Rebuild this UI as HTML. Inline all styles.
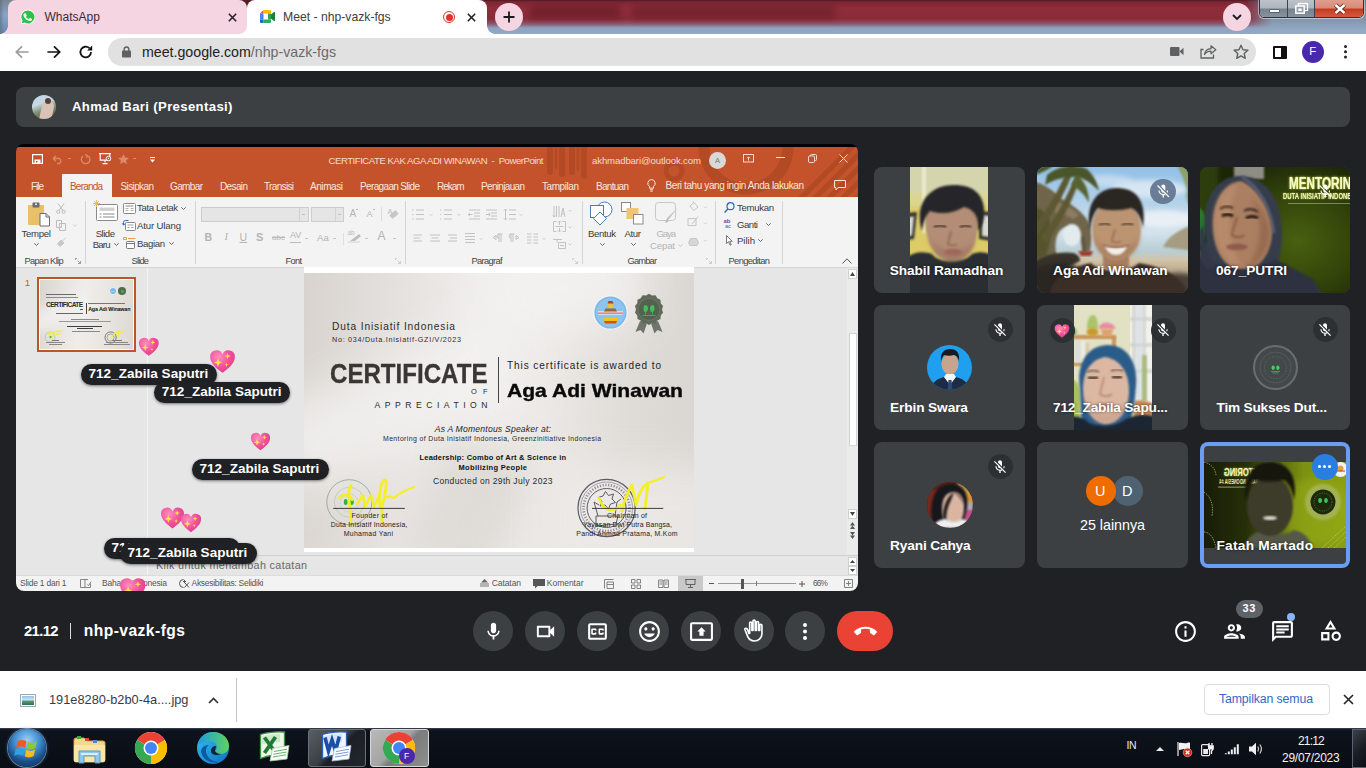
<!DOCTYPE html>
<html lang="id">
<head>
<meta charset="utf-8">
<title>Meet - nhp-vazk-fgs</title>
<style>
*{box-sizing:border-box;margin:0;padding:0}
html,body{width:1366px;height:768px;overflow:hidden;background:#202124;font-family:"Liberation Sans",sans-serif}
.a{position:absolute}
.t{position:absolute;white-space:nowrap;line-height:1}
svg{position:absolute;overflow:visible}
#root{position:relative;width:1366px;height:768px;overflow:hidden;background:#202124}
/* chrome */
#tabstrip{left:0;top:0;width:1366px;height:34px;background:linear-gradient(#4d1b25 0,#7e2633 2px,#8f2c3a 8px,#892a38 19px,#8a5a72 24px,#8ea3c0 28px,#92aac6 34px)}
#toolbar{left:0;top:34px;width:1366px;height:37px;background:#fff}
/* meet */
.tile{position:absolute;background:#3c4043;border-radius:8px;overflow:hidden}
.nm{position:absolute;white-space:nowrap;line-height:1;color:#fff;font-weight:bold;font-size:13.7px;text-shadow:0 0 2px rgba(0,0,0,.5)}
.mute{position:absolute;width:24px;height:24px;border-radius:50%;background:rgba(32,33,36,.55)}
.cb{position:absolute;width:40px;height:40px;border-radius:50%;background:#3c4043;top:611px}
/* ppt */
#ppt{left:16px;top:144px;width:842px;height:447px;background:#000;border-radius:8px;overflow:hidden}
.rt{position:absolute;white-space:nowrap;line-height:1;font-size:10px;color:#444}
.pill{position:absolute;height:21px;border-radius:10.5px;background:#202124;color:#fff;font-weight:bold;font-size:13.5px;line-height:19.4px;padding-left:7.5px;letter-spacing:.03px;white-space:nowrap;box-shadow:0 1px 3px rgba(0,0,0,.5)}
</style>
</head>
<body>
<div id="root">

<!-- ===== CHROME TAB STRIP ===== -->
<div class="a" id="tabstrip"></div>

<!-- left glass edge -->
<div class="a" style="left:0;top:0;width:18px;height:34px;background:linear-gradient(#7a8592 0,#8195ad 8px,#88a5c6 14px,#7d9cc0 22px,#6686ae 34px)"></div><div class="a" style="left:0;top:0;width:4px;height:34px;background:linear-gradient(90deg,rgba(90,100,115,.55),rgba(90,100,115,0))"></div>
<!-- WhatsApp tab (inactive, pink) -->
<div class="a" style="left:236px;top:0;width:14px;height:34px;background:linear-gradient(#4d1b25 0,#5a1c27 8px,#fff 9px)"></div>
<div class="a" style="left:8px;top:0;width:239px;height:34px;background:#f6d5e3;border-radius:8px 8px 8px 0"></div>
<div class="a" style="left:0;top:26px;width:8px;height:8px;background:radial-gradient(circle at 0 0,transparent 7.5px,#f6d5e3 8px)"></div>
<svg style="left:20px;top:9px" width="16" height="16" viewBox="0 0 16 16"><path d="M8 .6A7.3 7.3 0 0 0 1.7 11.7L.7 15.4l3.8-1A7.3 7.3 0 1 0 8 .6z" fill="#fff"/><path d="M8 1.4A6.5 6.5 0 0 0 2.5 11.5L1.8 14.3l2.9-.8A6.5 6.5 0 1 0 8 1.4z" fill="#2bc24a"/><path d="M5.6 4.3c-.2-.4-.4-.4-.6-.4h-.5c-.2 0-.5.1-.7.4-.3.3-.9.9-.9 2.100s.9 2.400 1.100 2.600c.1.200 1.800 2.800 4.400 3.800 2.100.8 2.600.7 3 .6.500-.1 1.500-.6 1.700-1.200.2-.6.2-1.100.1-1.200-.1-.1-.2-.2-.5-.3l-1.700-.8c-.2-.1-.4-.1-.6.1l-.8 1c-.1.2-.3.2-.5.100-1.200-.5-2.300-1.500-3-2.700-.1-.2 0-.4.100-.5l.6-.7c.1-.2.100-.3 0-.5z" fill="#fff" transform="translate(1.1 1.0) scale(.82)"/></svg>
<div class="t" style="left:44.5px;top:11px;font-size:12px;color:#3b2b3a">WhatsApp</div>
<svg style="left:227.500px;top:12.500px" width="9" height="9" viewBox="0 0 9 9"><path d="M.8.8l7.400 7.400M8.200.8L.8 8.200" stroke="#2a1f27" stroke-width="1.600" fill="none"/></svg>
<!-- Meet tab (active, white) -->
<div class="a" style="left:247px;top:0;width:240px;height:34px;background:#fff;border-radius:8px 8px 0 0"></div>
<div class="a" style="left:487px;top:26px;width:8px;height:8px;background:radial-gradient(circle at 100% 0,transparent 7.5px,#fff 8px)"></div>
<svg style="left:259.500px;top:10px" width="15" height="13" viewBox="0 0 15 13"><path d="M0 3.500L3.500 0v3.500z" fill="#ea4335"/><path d="M3.500 0H10a1 1 0 0 1 1 1v2.500H3.500z" fill="#fbbc04"/><path d="M0 3.500h3.500v6H0z" fill="#4285f4"/><path d="M0 9.500h3.500V13H1a1 1 0 0 1-1-1z" fill="#1967d2"/><path d="M3.500 9.500H11V12a1 1 0 0 1-1 1H3.500z" fill="#34a853"/><path d="M11 3.500V5l-1.800 1.500L11 8v1.500H8V6.500 3.500z" fill="#34a853"/><path d="M8.500 6.500L14 2a.6.6 0 0 1 1 .5v8a.6.6 0 0 1-1 .5z" fill="#188038"/><path d="M8.500 6.500L11 4.400v4.200z" fill="#34a853"/></svg>
<div class="t" style="left:283px;top:11px;font-size:12.200px;color:#3c4043">Meet - nhp-vazk-fgs</div>
<div class="a" style="left:443px;top:11px;width:12px;height:12px;border-radius:50%;border:1.200px solid #e0341f;background:#fff"></div>
<div class="a" style="left:445.500px;top:13.500px;width:7px;height:7px;border-radius:50%;background:#e0341f"></div>
<svg style="left:466.500px;top:12.500px" width="9" height="9" viewBox="0 0 9 9"><path d="M.8.8l7.400 7.400M8.200.8L.8 8.200" stroke="#202124" stroke-width="1.600" fill="none"/></svg>
<!-- new tab button -->
<div class="a" style="left:494.500px;top:3px;width:28px;height:28px;border-radius:50%;background:#f6d5e3"></div>
<svg style="left:502.500px;top:11px" width="12" height="12" viewBox="0 0 12 12"><path d="M6 .5v11M.5 6h11" stroke="#1a1a1a" stroke-width="1.800" fill="none"/></svg>
<!-- blurred window text behind glass -->
<div class="a" style="left:530px;top:5px;width:90px;height:14px;background:#6d1f2b;filter:blur(3px);opacity:.8"></div>
<div class="a" style="left:632px;top:5px;width:203px;height:14px;background:#6f202c;filter:blur(3px);opacity:.7"></div>
<!-- right glass -->
<div class="a" style="left:1246px;top:0;width:120px;height:34px;background:linear-gradient(#66778b 0,#74869b 8px,#8397ad 20px,#93a9c4 30px,#95abc6 34px);-webkit-mask-image:linear-gradient(90deg,transparent,#000 26px);mask-image:linear-gradient(90deg,transparent,#000 26px)"></div>
<!-- tab search -->
<div class="a" style="left:1223px;top:3px;width:28px;height:28px;border-radius:50%;background:#f6d5e3"></div>
<svg style="left:1232px;top:13.500px" width="10" height="7" viewBox="0 0 10 7"><path d="M1 1l4 4 4-4" stroke="#1a1a1a" stroke-width="1.800" fill="none"/></svg>
<!-- window controls (Win7) -->
<div class="a" style="left:1259px;top:-4px;width:105px;height:22px;border:1px solid #2c333c;border-radius:0 0 5px 5px;background:#e8eef4;overflow:hidden;box-shadow:0 0 0 1px rgba(255,255,255,.45)">
  <div class="a" style="left:0;top:0;width:28px;height:22px;background:linear-gradient(#c0c7cd 0,#aeb6bd 11px,#77828e 12px,#8a96a3 22px);border-right:1px solid #3b434c"></div>
  <div class="a" style="left:28px;top:0;width:27px;height:22px;background:linear-gradient(#c0c7cd 0,#aeb6bd 11px,#77828e 12px,#8a96a3 22px);border-right:1px solid #3b434c"></div>
  <div class="a" style="left:55px;top:0;width:50px;height:22px;background:linear-gradient(#e3a595 0,#d98a78 11px,#c43a1e 12px,#d9624a 22px)"></div>
  <div class="a" style="left:9px;top:12px;width:11px;height:4px;background:#fff;border:1px solid #5a636d;border-radius:1px"></div>
  <svg style="left:35px;top:6px" width="13" height="11" viewBox="0 0 13 11"><rect x="3.500" y=".5" width="9" height="7" fill="none" stroke="#fff" stroke-width="1.300"/><rect x=".8" y="3" width="8.400" height="7.200" fill="#97a1ab" stroke="#fff" stroke-width="1.500"/><rect x="3.300" y="5.500" width="3.400" height="2.500" fill="#fff"/></svg>
  <svg style="left:74px;top:7px" width="12" height="10" viewBox="0 0 12 10"><path d="M1.500 1l9 8M10.500 1l-9 8" stroke="#4a2019" stroke-width="4" fill="none"/><path d="M1.500 1l9 8M10.500 1l-9 8" stroke="#fff" stroke-width="2.400" fill="none"/></svg>
</div>


<!-- ===== CHROME TOOLBAR ===== -->
<div class="a" id="toolbar"></div>

<!-- back / forward / reload -->
<svg style="left:15px;top:45px" width="14" height="14" viewBox="0 0 14 14"><path d="M13.600 7H1.800M7 1.300L1.300 7 7 12.700" stroke="#9b9b9b" stroke-width="1.700" fill="none"/></svg>
<svg style="left:47px;top:45px" width="14" height="14" viewBox="0 0 14 14"><path d="M.4 7h11.800M7 1.300L12.700 7 7 12.700" stroke="#111" stroke-width="1.700" fill="none"/></svg>
<svg style="left:79px;top:45px" width="14" height="14" viewBox="0 0 14 14"><path d="M12 7A5.300 5.300 0 1 1 10.400 3.200" stroke="#111" stroke-width="1.800" fill="none"/><path d="M13.200 .6v5H8.200z" fill="#111"/></svg>
<!-- omnibox -->
<div class="a" style="left:108px;top:38px;width:1148px;height:28px;border-radius:14px;background:#e1e1e1"></div>
<svg style="left:121.500px;top:45.500px" width="9" height="12" viewBox="0 0 9 12"><rect x="0" y="4.600" width="9" height="7" rx=".8" fill="#5f6062"/><path d="M2.200 5V3.300a2.300 2.300 0 0 1 4.600 0V5" stroke="#5f6062" stroke-width="1.400" fill="none"/></svg>
<div class="t" style="left:142px;top:44.500px;font-size:14.200px;color:#202124">meet.google.com<span style="color:#6b6b6b">/nhp-vazk-fgs</span></div>
<!-- camera indicator -->
<svg style="left:1170px;top:46px" width="14" height="11" viewBox="0 0 14 11"><rect x="0" y="1" width="9.500" height="9" rx="1" fill="#5f6062"/><path d="M9.500 5.500L13.500 1.800v7.400z" fill="#5f6062"/></svg>
<!-- share -->
<svg style="left:1200px;top:44px" width="17" height="15" viewBox="0 0 17 15"><path d="M3.500 5.500H1V14h12.500v-3.500" stroke="#5f6062" stroke-width="1.300" fill="none"/><path d="M4.500 10.500c.5-3.500 2.500-5.500 6.500-5.800V1.800L15.800 5.800 11 9.800V7.200c-3 0-5 1-6.500 3.300z" stroke="#5f6062" stroke-width="1.200" fill="none" stroke-linejoin="round"/></svg>
<!-- star -->
<svg style="left:1232.500px;top:44px" width="16" height="15" viewBox="0 0 16 15"><path d="M8 1.200l2 4.500 4.900.5-3.700 3.300 1.100 4.800L8 11.800l-4.300 2.500 1.100-4.800L1.100 6.200l4.900-.5z" stroke="#5f6062" stroke-width="1.400" fill="none" stroke-linejoin="round"/></svg>
<!-- side panel -->
<div class="a" style="left:1272.500px;top:45.500px;width:14px;height:13px;border:2px solid #111;border-right-width:6px;border-radius:1px;background:#fff"></div>
<!-- profile -->
<div class="a" style="left:1302px;top:41px;width:22px;height:22px;border-radius:50%;background:#4a28ae"></div>
<div class="t" style="left:1309.300px;top:46.300px;font-size:11.500px;color:#fff">F</div>
<!-- menu -->
<div class="a" style="left:1344px;top:44.800px;width:3px;height:3px;border-radius:50%;background:#222;box-shadow:0 5.200px 0 #222,0 10.400px 0 #222"></div>


<!-- ===== MEET: presenter bar ===== -->
<div class="a" style="left:16px;top:87px;width:1334px;height:40px;background:#3c4043;border-radius:8px"></div>

<div class="a" style="left:32px;top:95px;width:24px;height:24px;border-radius:50%;overflow:hidden;background:linear-gradient(160deg,#bcd3e8 0,#c9d9e4 35%,#7d8f6e 60%,#4c5a44 100%)">
  <div class="a" style="left:9px;top:6px;width:12px;height:20px;border-radius:5px 5px 0 0;background:#d9c3b8;transform:rotate(12deg)"></div>
  <div class="a" style="left:13px;top:3px;width:6px;height:6px;border-radius:50%;background:#5a4034"></div>
</div>
<div class="t" style="left:72px;top:99.500px;font-size:13.200px;font-weight:bold;color:#fff;letter-spacing:.33px">Ahmad Bari (Presentasi)</div>


<!-- ===== MEET: presentation (PowerPoint) ===== -->
<div class="a" id="ppt">
<div class="a" style="left:-16px;top:-144px;width:1366px;height:768px">
<!-- PowerPoint window : page coords -->
<div class="a" style="left:16px;top:147px;width:842px;height:50px;background:#c4532b"></div>
<!-- title bar pattern -->
<svg style="left:540px;top:147px;overflow:hidden" width="318" height="50" viewBox="0 0 318 50" fill="none" stroke="#ac4723" opacity=".75">
 <path d="M10 -5v30M22 -5v32M32 -5v30M44 -5v34" stroke-width="6" stroke-linecap="round"/>
 <path d="M16 -5v26M38 -5v28" stroke-width="2.500" stroke-linecap="round"/>
 <circle cx="134" cy="24" r="8" stroke-width="5"/>
 <circle cx="206" cy="0" r="42" stroke-width="11"/>
 <path d="M250 62l70-70M264 62l70-70M278 62l70-70M292 62l70-70M306 62l70-70" stroke-width="5"/>
</svg>
<!-- QAT icons -->
<svg style="left:31.500px;top:154px" width="11" height="10" viewBox="0 0 11 10"><path d="M.6.600h9.800v8.800H.6z" fill="none" stroke="#fff" stroke-width="1.200"/><rect x="2.500" y="5.500" width="6" height="3.800" fill="#fff"/><rect x="4" y="7" width="1.500" height="1.500" fill="#c4532b"/></svg>
<svg style="left:52px;top:155px" width="12" height="9" viewBox="0 0 12 9"><path d="M1 3.500h6.500a3 3 0 0 1 0 5H5M1 3.500L4 .8M1 3.500L4 6.200" stroke="#dc8a68" stroke-width="1.300" fill="none"/></svg>
<div class="a" style="left:68px;top:158px;width:3px;height:1px;background:#dc8a68"></div>
<svg style="left:80px;top:154px" width="11" height="11" viewBox="0 0 11 11"><path d="M7.500 1.500A4.300 4.300 0 1 1 3 2M7.500 1.500L5.200.3M7.500 1.500L6.400 3.800" stroke="#dc8a68" stroke-width="1.300" fill="none"/></svg>
<svg style="left:99px;top:153px" width="13" height="12" viewBox="0 0 13 12"><path d="M0 .6h12M1.200.6v6.500h9.600V.6M6 7.100v2.500M3.500 10.600h5" stroke="#fff" stroke-width="1.100" fill="none"/><circle cx="9.500" cy="5.500" r="2.300" fill="#c4532b" stroke="#fff" stroke-width=".9"/><path d="M8.900 4.500v2l1.600-1z" fill="#fff"/></svg>
<svg style="left:117.500px;top:154px" width="11" height="10" viewBox="0 0 11 10"><path d="M5.500 0l1.600 3.500 3.900.4-2.900 2.600.8 3.500L5.500 8.200 2.100 10l.8-3.500L0 3.900l3.900-.4z" fill="#dc8a68"/></svg>
<div class="a" style="left:133px;top:158px;width:3px;height:1px;background:#dc8a68"></div>
<svg style="left:149.500px;top:157px" width="5" height="6" viewBox="0 0 5 6"><path d="M0 .5h5" stroke="#fff" stroke-width="1"/><path d="M0 2.500h5L2.500 5.500z" fill="#fff"/></svg>
<!-- title -->
<div class="t" style="left:328.50px;top:156.01px;font-size:9.6px;letter-spacing:-0.470px;color:#f7dacd">CERTIFICATE KAK AGA ADI WINAWAN&nbsp; -&nbsp; PowerPoint</div>
<div class="t" style="left:592.00px;top:156.01px;font-size:9.6px;letter-spacing:-0.124px;color:#f7dacd">akhmadbari@outlook.com</div>
<div class="a" style="left:709px;top:152px;width:17px;height:17px;border-radius:50%;background:#d9d9d9"></div>
<div class="t" style="left:715.00px;top:157.10px;font-size:7.5px;color:#777">A</div>
<!-- window buttons -->
<svg style="left:743px;top:153.500px" width="11" height="9" viewBox="0 0 11 9"><rect x=".5" y=".5" width="10" height="7.500" fill="none" stroke="#f7dacd" stroke-width="1"/><path d="M5.500 6.500V3M4 4.300L5.500 2.800 7 4.300" stroke="#f7dacd" stroke-width="1" fill="none"/></svg>
<div class="a" style="left:776px;top:157px;width:9px;height:1px;background:#f7dacd"></div>
<svg style="left:807.500px;top:153.500px" width="9" height="9" viewBox="0 0 9 9"><rect x=".5" y="2" width="6" height="6.500" rx="1" fill="none" stroke="#f7dacd" stroke-width="1"/><path d="M2.500 2V1.500a1 1 0 0 1 1-1h4a1 1 0 0 1 1 1v4a1 1 0 0 1-1 1H6.500" fill="none" stroke="#f7dacd" stroke-width="1"/></svg>
<svg style="left:838.500px;top:153.500px" width="9" height="9" viewBox="0 0 9 9"><path d="M.5.500l8 8M8.500.500l-8 8" stroke="#f7dacd" stroke-width="1" fill="none"/></svg>
<!-- ribbon tabs -->
<div class="a" style="left:62px;top:174px;width:50px;height:24px;background:#f3f3f3"></div>
<div class="t" style="left:31.00px;top:181.50px;font-size:10.0px;letter-spacing:-1.042px;color:#fbe6dc">File</div>
<div class="t" style="left:70.00px;top:181.50px;font-size:10.0px;letter-spacing:-0.802px;color:#c4532b">Beranda</div>
<div class="t" style="left:120.50px;top:181.50px;font-size:10.0px;letter-spacing:-0.616px;color:#fbe6dc">Sisipkan</div>
<div class="t" style="left:170.00px;top:181.50px;font-size:10.0px;letter-spacing:-0.625px;color:#fbe6dc">Gambar</div>
<div class="t" style="left:220.00px;top:181.50px;font-size:10.0px;letter-spacing:-0.628px;color:#fbe6dc">Desain</div>
<div class="t" style="left:264.00px;top:181.50px;font-size:10.0px;letter-spacing:-0.663px;color:#fbe6dc">Transisi</div>
<div class="t" style="left:310.00px;top:181.50px;font-size:10.0px;letter-spacing:-0.430px;color:#fbe6dc">Animasi</div>
<div class="t" style="left:360.00px;top:181.50px;font-size:10.0px;letter-spacing:-0.645px;color:#fbe6dc">Peragaan Slide</div>
<div class="t" style="left:437.00px;top:181.50px;font-size:10.0px;letter-spacing:-1.047px;color:#fbe6dc">Rekam</div>
<div class="t" style="left:481.00px;top:181.50px;font-size:10.0px;letter-spacing:-0.672px;color:#fbe6dc">Peninjauan</div>
<div class="t" style="left:542.00px;top:181.50px;font-size:10.0px;letter-spacing:-0.433px;color:#fbe6dc">Tampilan</div>
<div class="t" style="left:596.00px;top:181.50px;font-size:10.0px;letter-spacing:-0.711px;color:#fbe6dc">Bantuan</div>
<svg style="left:647px;top:179px" width="9" height="13" viewBox="0 0 9 13"><path d="M4.500.600a3.700 3.700 0 0 0-2 6.800v1.800h4V7.400a3.700 3.700 0 0 0-2-6.800zM3 10.800h3M3.400 12.200h2.200" stroke="#fbe6dc" stroke-width="1" fill="none"/></svg>
<div class="t" style="left:665.50px;top:181.00px;font-size:10.0px;letter-spacing:-0.398px;color:#fbe6dc">Beri tahu yang ingin Anda lakukan</div>
<svg style="left:834px;top:180px" width="12" height="11" viewBox="0 0 12 11"><path d="M.5.500h11v7H4L2 10V7.500H.5z" stroke="#fbe6dc" stroke-width="1" fill="none"/></svg>
<!-- ribbon body -->
<div class="a" style="left:16px;top:197px;width:842px;height:70px;background:#f3f3f3"></div>
<div class="a" style="left:16px;top:266.500px;width:842px;height:1.500px;background:#d6d6d6"></div>
<!-- separators -->
<div class="a" style="left:85px;top:201px;width:1px;height:63px;background:#d4d4d4"></div>
<div class="a" style="left:195px;top:201px;width:1px;height:63px;background:#d4d4d4"></div>
<div class="a" style="left:404.500px;top:201px;width:1px;height:63px;background:#d4d4d4"></div>
<div class="a" style="left:581.500px;top:201px;width:1px;height:63px;background:#d4d4d4"></div>
<div class="a" style="left:715px;top:201px;width:1px;height:63px;background:#d4d4d4"></div>
<div class="a" style="left:782px;top:201px;width:1px;height:63px;background:#d4d4d4"></div>
<!-- Papan Klip group -->
<svg style="left:27px;top:201.500px" width="24" height="25" viewBox="0 0 24 25"><rect x="1" y="3" width="16" height="20" rx="1" fill="#e8c069"/><rect x="5.500" y=".5" width="7" height="5" rx="1" fill="#6b6b6b"/><circle cx="9" cy="2.200" r="1" fill="#f3f3f3"/><path d="M13 11.500h6l3.500 3.500V24H13z" fill="#fff" stroke="#6b6b6b" stroke-width="1"/><path d="M19 11.500V15h3.500" fill="none" stroke="#6b6b6b" stroke-width="1"/></svg>
<div class="t" style="left:21.50px;top:228.51px;font-size:9.6px;letter-spacing:-0.287px;color:#3b3b3b">Tempel</div>
<svg style="left:34px;top:243px" width="5" height="3" viewBox="0 0 5 3"><path d="M.3.300l2.200 2.200L4.700.3" stroke="#555" stroke-width=".9" fill="none"/></svg>
<svg style="left:56px;top:203px" width="10" height="11" viewBox="0 0 10 11"><path d="M2 .5l5 7M8 .5l-5 7" stroke="#bdbdbd" stroke-width="1" fill="none"/><circle cx="2.300" cy="8.800" r="1.600" fill="none" stroke="#bdbdbd" stroke-width="1"/><circle cx="7.700" cy="8.800" r="1.600" fill="none" stroke="#bdbdbd" stroke-width="1"/></svg>
<svg style="left:56px;top:220px" width="10" height="11" viewBox="0 0 10 11"><path d="M.5.500h5v7h-5zM3.500 3.500h6v7h-6z" fill="#f3f3f3" stroke="#bdbdbd" stroke-width="1"/></svg>
<svg style="left:72.500px;top:224px" width="4" height="3" viewBox="0 0 5 3"><path d="M.3.300l2.200 2.200L4.700.3" stroke="#c4c4c4" stroke-width=".9" fill="none"/></svg>
<svg style="left:56px;top:237px" width="11" height="10" viewBox="0 0 11 10"><path d="M10 .5L6 4.500M5 3l3 3-4 3.500L1.500 7z" fill="#c9c9c9" stroke="#c0c0c0" stroke-width=".8"/></svg>
<div class="t" style="left:24.50px;top:257.16px;font-size:9.3px;letter-spacing:-0.641px;color:#444">Papan Klip</div>
<svg style="left:75px;top:258px" width="6" height="6" viewBox="0 0 6 6"><path d="M.5 2V.5H2M2.500 2.500l3 3M5.500 3v2.500H3" stroke="#888" stroke-width=".8" fill="none"/></svg>
<!-- Slide group -->
<svg style="left:93px;top:200px" width="26" height="23" viewBox="0 0 26 23"><rect x="3.500" y="4.500" width="21" height="16" rx="1" fill="#fff" stroke="#8a8a8a" stroke-width="1"/><rect x="6.500" y="7.500" width="15" height="3.500" fill="#d2d2d2"/><path d="M6.500 14h2M10 14h11.500M6.500 17h2M10 17h11.500" stroke="#8a8a8a" stroke-width="1"/><path d="M3.500 0v7M0 3.500h7M1 1l5 5M6 1L1 6" stroke="#e6b84a" stroke-width=".9"/></svg>
<div class="t" style="left:95.70px;top:228.51px;font-size:9.6px;letter-spacing:-0.511px;color:#3b3b3b">Slide</div>
<div class="t" style="left:92.70px;top:239.51px;font-size:9.6px;letter-spacing:-0.822px;color:#3b3b3b">Baru</div>
<svg style="left:113.500px;top:243px" width="5" height="3" viewBox="0 0 5 3"><path d="M.3.300l2.200 2.200L4.700.3" stroke="#555" stroke-width=".9" fill="none"/></svg>
<svg style="left:123px;top:203px" width="13" height="11" viewBox="0 0 13 11"><rect x=".5" y=".5" width="12" height="10" rx="1" fill="#fff" stroke="#8a8a8a" stroke-width="1"/><path d="M2.500 3h8" stroke="#8a8a8a" stroke-width="1.200"/><path d="M2.500 5.500h3M2.500 7.500h3M7.500 5.500h3M7.500 7.500h3" stroke="#b0b0b0" stroke-width="1"/></svg>
<div class="t" style="left:137.00px;top:203.01px;font-size:9.6px;letter-spacing:-0.365px;color:#3b3b3b">Tata Letak</div>
<svg style="left:181px;top:206.500px" width="5" height="3" viewBox="0 0 5 3"><path d="M.3.300l2.200 2.200L4.700.3" stroke="#555" stroke-width=".9" fill="none"/></svg>
<svg style="left:123px;top:220px" width="13" height="11" viewBox="0 0 13 11"><rect x="2.500" y="2.500" width="10" height="8" rx="1" fill="#fff" stroke="#8a8a8a" stroke-width="1"/><path d="M4.500 5h6M4.500 7.500h2M8 7.500h2.500" stroke="#a0a0a0" stroke-width="1"/><path d="M.5 5V2.500a2 2 0 0 1 2-2h3M.5 5L-.8 3.300M.5 5l1.700-1.300" stroke="#2b6cb8" stroke-width="1" fill="none"/></svg>
<div class="t" style="left:137.00px;top:221.01px;font-size:9.6px;letter-spacing:-0.148px;color:#3b3b3b">Atur Ulang</div>
<svg style="left:123px;top:237px" width="13" height="12" viewBox="0 0 13 12"><path d="M.5.500h3v2h-3zM5 1.500h7.500" stroke="#e6a23c" stroke-width="1" fill="none"/><rect x="3.500" y="4.500" width="8" height="7" rx=".8" fill="#fff" stroke="#7a7a7a" stroke-width="1"/><path d="M3.500 6.500h8" stroke="#7a7a7a" stroke-width="1"/></svg>
<div class="t" style="left:137.00px;top:238.51px;font-size:9.6px;letter-spacing:-0.375px;color:#3b3b3b">Bagian</div>
<svg style="left:169px;top:241.500px" width="5" height="3" viewBox="0 0 5 3"><path d="M.3.300l2.200 2.200L4.700.3" stroke="#555" stroke-width=".9" fill="none"/></svg>
<div class="t" style="left:131.50px;top:257.16px;font-size:9.3px;letter-spacing:-0.797px;color:#444">Slide</div>
<!-- Font group -->
<div class="a" style="left:201px;top:206.500px;width:107.500px;height:15.500px;background:#e5e5e5;border:1px solid #cdcdcd"></div>
<div class="a" style="left:299px;top:207.500px;width:1px;height:13.500px;background:#d2d2d2"></div>
<div class="a" style="left:302px;top:213.500px;width:3px;height:1px;background:#c2c2c2"></div>
<div class="a" style="left:310.500px;top:206.500px;width:33px;height:15.500px;background:#e5e5e5;border:1px solid #cdcdcd"></div>
<div class="a" style="left:335px;top:207.500px;width:1px;height:13.500px;background:#d2d2d2"></div>
<div class="a" style="left:337.500px;top:213.500px;width:3px;height:1px;background:#c2c2c2"></div>
<div class="t" style="left:349.50px;top:209.30px;font-size:10.0px;color:#b4b4b4">A</div><div class="a" style="left:356px;top:208.500px;width:2px;height:1px;background:#b4b4b4"></div>
<div class="t" style="left:366.50px;top:210.32px;font-size:9.0px;color:#b4b4b4">A</div><div class="a" style="left:372.500px;top:209px;width:2px;height:1px;background:#b4b4b4"></div>
<div class="a" style="left:381px;top:207px;width:1px;height:14px;background:#dcdcdc"></div>
<div class="t" style="left:387.50px;top:207.60px;font-size:7.5px;color:#bcbcbc">A</div>
<div class="a" style="left:390px;top:212px;width:8px;height:5px;background:#c6c6c6;transform:rotate(-40deg);border-radius:1px"></div>
<div class="t" style="left:204.50px;top:232.04px;font-size:10.5px;color:#b4b4b4;font-weight:bold">B</div>
<div class="t" style="left:224.50px;top:232.04px;font-size:10.5px;color:#b4b4b4;font-style:italic;font-family:'Liberation Serif',serif">I</div>
<div class="t" style="left:239.50px;top:232.04px;font-size:10.5px;color:#b4b4b4;text-decoration:underline">U</div>
<div class="t" style="left:256.00px;top:231.78px;font-size:11.0px;color:#b4b4b4;font-weight:bold">S</div>
<div class="t" style="left:272.00px;top:234.34px;font-size:8.0px;color:#b9b9b9;text-decoration:line-through">abc</div>
<div class="t" style="left:290.00px;top:231.32px;font-size:9.0px;color:#b4b4b4">AV</div>
<div class="a" style="left:290px;top:241.500px;width:11px;height:1px;background:#b9b9b9"></div>
<div class="a" style="left:305px;top:237.500px;width:3px;height:1px;background:#c6c6c6"></div>
<div class="t" style="left:317.00px;top:232.51px;font-size:9.6px;color:#b4b4b4">Aa</div>
<div class="a" style="left:332.500px;top:237.500px;width:3px;height:1px;background:#c6c6c6"></div>
<div class="a" style="left:343px;top:233px;width:1px;height:12px;background:#dfdfdf"></div>
<div class="t" style="left:347.50px;top:229.62px;font-size:6.5px;color:#bcbcbc">ab</div>
<div class="a" style="left:350px;top:237px;width:11px;height:2.500px;background:#bdbdbd;transform:rotate(-38deg)"></div>
<div class="a" style="left:347.500px;top:241px;width:12px;height:2px;background:#e2e2e2"></div>
<div class="a" style="left:365px;top:237.500px;width:3px;height:1px;background:#c6c6c6"></div>
<div class="t" style="left:377.50px;top:230.26px;font-size:12.0px;color:#b4b4b4">A</div>
<div class="a" style="left:393px;top:237.500px;width:3px;height:1px;background:#c6c6c6"></div>
<div class="t" style="left:285.50px;top:257.16px;font-size:9.3px;letter-spacing:-0.703px;color:#444">Font</div>
<svg style="left:395px;top:258px" width="6" height="6" viewBox="0 0 6 6"><path d="M.5 2V.5H2M2.500 2.500l3 3M5.500 3v2.500H3" stroke="#c4c4c4" stroke-width=".8" fill="none"/></svg>
<!-- Paragraf group (all disabled) -->
<svg style="left:412px;top:207.700px" width="160" height="42" viewBox="0 0 160 42" fill="none" stroke="#c2c2c2" stroke-width="1">
 <path d="M0 2h1.500M0 6.500h1.500M0 11h1.500M4 2h8M4 6.500h8M4 11h8"/>
 <path d="M17.500 6l1.500 1.500L20.500 6" stroke="#d0d0d0"/>
 <path d="M28 2h1.200M28 6.500h1.200M28 11h1.200M32 2h8M32 6.500h8M32 11h8"/>
 <path d="M45.500 6l1.500 1.500L48.500 6" stroke="#d0d0d0"/>
 <path d="M57 2h11M62 5h6M62 8h6M57 11h11M60.500 6.500h-4M58 5l-1.800 1.500L58 8"/>
 <path d="M74 2h11M79 5h6M79 8h6M74 11h11M74 6.500h4M76.500 5l1.800 1.500L76.500 8"/>
 <path d="M93.500 1v11M92 2.500L93.500 1 95 2.500M92 10.500l1.500 1.500 1.500-1.500M97 2h7M97 6.500h7M97 11h7"/>
 <path d="M107.500 6l1.500 1.500 1.500-1.500" stroke="#d0d0d0"/>
 <path d="M1.500 27h8.500M1.500 30h6.500M1.500 33h8.500"/>
 <path d="M18 27h10M19.500 30h7M18 33h10"/>
 <path d="M36 27h9M38 30h7M36 33h9"/>
 <path d="M53 25.500h10M53 28.500h10M53 31.500h10M53 34.500h10"/>
 <path d="M67.500 30l1.500 1.500 1.500-1.500" stroke="#d0d0d0"/>
 <path d="M81 29.500l3-2v4zM89 26v8M87 26v8M86 26h4.500M87 26a2 2 0 0 0 0 4" />
 <path d="M107 29.500l-3-2v4zM101 26v8M99 26v8M98 26h4.500M99 26a2 2 0 0 0 0 4" />
 <path d="M115 26h4.500M115 29h4.500M115 32h4.500M115 35h4.500M121.500 26h4.500M121.500 29h4.500M121.500 32h4.500M121.500 35h4.500"/>
 <path d="M130.500 30l1.500 1.500 1.500-1.500" stroke="#d0d0d0"/>
 <path d="M142 -2v11M144.500 -2v11M147 -2v11M140.800 7.500L142 9l1.200-1.500M149 9l2-9 2 9M149.800 6h2.500"/>
 <path d="M156.500 2l1.500 1.500 1.500-1.500" stroke="#d0d0d0"/>
 <path d="M141.500 13.500v10M153.500 13.500v10M141.500 13.500h3M150.500 13.500h3M141.500 23.500h3M150.500 23.500h3M143.500 18.500h8M147.500 13v4M146 14.500l1.500-1.500 1.500 1.500M147.500 24v-4M146 22.500l1.500 1.500 1.500-1.500"/>
 <path d="M156.500 18.500l1.500 1.500 1.500-1.500" stroke="#d0d0d0"/>
 <path d="M141 31.500h9M145 31.500v3M146.500 34.500h7v6h-7zM148 37.500h4"/>
 <path d="M156.500 35.500l1.500 1.500 1.500-1.500" stroke="#d0d0d0"/>
</svg>
<div class="t" style="left:471.50px;top:257.16px;font-size:9.3px;letter-spacing:-0.667px;color:#444">Paragraf</div>
<svg style="left:572px;top:258px" width="6" height="6" viewBox="0 0 6 6"><path d="M.5 2V.5H2M2.500 2.500l3 3M5.500 3v2.500H3" stroke="#c4c4c4" stroke-width=".8" fill="none"/></svg>
<!-- Gambar group -->
<svg style="left:589px;top:200.500px" width="25" height="25" viewBox="0 0 25 25"><circle cx="15.500" cy="8.500" r="7.500" fill="#fff" stroke="#4a7ab5" stroke-width="1"/><rect x="1.500" y="4.500" width="13" height="12" fill="#fff" stroke="#4a7ab5" stroke-width="1"/><path d="M11 11l6.500 6.500L11 24l-6.500-6.500z" fill="#fff" stroke="#4a7ab5" stroke-width="1"/></svg>
<div class="t" style="left:588.00px;top:228.51px;font-size:9.6px;letter-spacing:-0.375px;color:#3b3b3b">Bentuk</div>
<svg style="left:599.500px;top:243px" width="5" height="3" viewBox="0 0 5 3"><path d="M.3.300l2.200 2.200L4.700.3" stroke="#555" stroke-width=".9" fill="none"/></svg>
<svg style="left:621px;top:201.500px" width="23" height="23" viewBox="0 0 23 23"><rect x=".5" y=".5" width="9" height="9" fill="#fff" stroke="#8a8a8a" stroke-width="1"/><rect x="5.500" y="6" width="12" height="11" fill="#efc578"/><rect x="12.500" y="12.500" width="9.500" height="9.500" fill="#fff" stroke="#8a8a8a" stroke-width="1"/></svg>
<div class="t" style="left:624.50px;top:228.51px;font-size:9.6px;letter-spacing:-0.370px;color:#3b3b3b">Atur</div>
<svg style="left:630.500px;top:243px" width="5" height="3" viewBox="0 0 5 3"><path d="M.3.300l2.200 2.200L4.700.3" stroke="#555" stroke-width=".9" fill="none"/></svg>
<svg style="left:655px;top:202px" width="26" height="24" viewBox="0 0 26 24"><rect x=".5" y=".5" width="20" height="18" rx="3" fill="#f3f3f3" stroke="#c8c8c8" stroke-width="1"/><path d="M22.500 6L14 17l-3 3 1-4z" fill="#c2c2c2"/><path d="M10 21l3.500-1.500-1.500-2.500z" fill="#b5b5b5"/></svg>
<div class="t" style="left:656.50px;top:228.51px;font-size:9.6px;letter-spacing:-1.146px;color:#b4b4b4">Gaya</div>
<div class="t" style="left:650.00px;top:240.51px;font-size:9.6px;letter-spacing:-0.152px;color:#b4b4b4">Cepat</div>
<svg style="left:677.500px;top:244px" width="5" height="3" viewBox="0 0 5 3"><path d="M.3.300l2.200 2.200L4.700.3" stroke="#c4c4c4" stroke-width=".9" fill="none"/></svg>
<svg style="left:687px;top:201px" width="24" height="48" viewBox="0 0 24 48" fill="none" stroke="#c6c6c6" stroke-width="1"><path d="M3 5l4-3.500L11 6 6.500 9.500zM7 1.500L5.500 0"/><path d="M17 5.500l1.500 1.500L20 5.500" stroke="#d2d2d2"/><path d="M1 17.500h8v7H1zM5 23l6-7.500" /><path d="M17 21.500l1.500 1.500 1.500-1.500" stroke="#d2d2d2"/><path d="M1.500 42l2-4.500h6l2 4.500-1.500 2.500h-7z" fill="#d6d6d6"/><path d="M17 39l1.500 1.500L20 39" stroke="#d2d2d2"/></svg>
<div class="t" style="left:627.50px;top:257.16px;font-size:9.3px;letter-spacing:-0.819px;color:#444">Gambar</div>
<svg style="left:706px;top:258px" width="6" height="6" viewBox="0 0 6 6"><path d="M.5 2V.5H2M2.500 2.500l3 3M5.500 3v2.500H3" stroke="#c4c4c4" stroke-width=".8" fill="none"/></svg>
<!-- Pengeditan group -->
<svg style="left:723.500px;top:202px" width="11" height="11" viewBox="0 0 11 11"><circle cx="6.500" cy="4.200" r="3.500" fill="none" stroke="#2b6cb8" stroke-width="1.200"/><path d="M4 6.800L.6 10.400" stroke="#2b6cb8" stroke-width="1.400"/></svg>
<div class="t" style="left:737.00px;top:203.01px;font-size:9.6px;letter-spacing:-0.323px;color:#3b3b3b">Temukan</div>
<div class="t" style="left:723.50px;top:218.38px;font-size:6.0px;color:#7a4a9a;font-weight:bold">ab</div>
<div class="t" style="left:725.00px;top:224.14px;font-size:5.5px;color:#2b6cb8">ac</div>
<div class="t" style="left:737.00px;top:219.51px;font-size:9.6px;letter-spacing:-0.484px;color:#3b3b3b">Ganti</div>
<svg style="left:765.500px;top:223px" width="5" height="3" viewBox="0 0 5 3"><path d="M.3.300l2.200 2.200L4.700.3" stroke="#555" stroke-width=".9" fill="none"/></svg>
<svg style="left:726px;top:235px" width="7" height="11" viewBox="0 0 7 11"><path d="M.5.500v8l2-1.800 1.500 3.500 1.200-.5-1.500-3.400h2.500z" fill="#fff" stroke="#555" stroke-width=".8"/></svg>
<div class="t" style="left:737.00px;top:235.51px;font-size:9.6px;letter-spacing:-0.035px;color:#3b3b3b">Pilih</div>
<svg style="left:758px;top:239px" width="5" height="3" viewBox="0 0 5 3"><path d="M.3.300l2.200 2.200L4.700.3" stroke="#555" stroke-width=".9" fill="none"/></svg>
<div class="t" style="left:728.50px;top:257.16px;font-size:9.3px;letter-spacing:-0.616px;color:#444">Pengeditan</div>
<svg style="left:842px;top:257.500px" width="10" height="6" viewBox="0 0 10 6"><path d="M.5 5.500L5 .8l4.500 4.700" stroke="#555" stroke-width="1" fill="none"/></svg>
<!-- PPT workspace -->
<div class="a" style="left:16px;top:268px;width:842px;height:308px;background:#e6e6e6"></div>
<div class="a" style="left:147px;top:268px;width:1px;height:307px;background:#f4f4f4"></div>
<div class="t" style="left:24.70px;top:278.20px;font-size:9.8px;color:#c8603a">1</div>
<!-- thumbnail -->
<div class="a" style="left:37px;top:277px;width:98.500px;height:75px;border:2px solid #ba5530;background:#fff"></div>
<div class="a" style="left:39.800px;top:280px;width:93px;height:69px;overflow:hidden;background:linear-gradient(98deg,#d9d4cf 0,#e6e3df 22%,#efedea 45%,#e9e6e2 70%,#dcd8d3 100%)"><div class="a" style="left:-10px;top:22px;width:60px;height:22px;background:#f3f2f0;filter:blur(6px);opacity:.8;transform:rotate(-22deg)"></div></div>
<div class="a" style="left:46px;top:293.70px;width:30.0px;height:1.2px;background:#6a6a6a"></div>
<div class="a" style="left:46px;top:296.90px;width:31.5px;height:0.8px;background:#8a8a8a"></div>
<div class="a" style="left:109.200px;top:287.200px;width:7.600px;height:7.600px;border-radius:50%;background:#7db8e8;border:.8px solid #f2f2f2"></div>
<div class="a" style="left:110.800px;top:290.500px;width:4.400px;height:1.200px;background:#e9c86a"></div>
<div class="a" style="left:118.300px;top:287.200px;width:8.200px;height:8.200px;border-radius:50%;background:#56694f"></div>
<div class="a" style="left:120.600px;top:289.800px;width:3.600px;height:3px;border-radius:40%;background:#38b04f"></div>
<div class="t" style="left:46.00px;top:302.27px;font-size:6.6px;letter-spacing:-0.591px;color:#2f2c2a;font-weight:bold">CERTIFICATE</div>
<div class="a" style="left:80px;top:309.40px;width:3.2px;height:0.8px;background:#555"></div>
<div class="a" style="left:56px;top:312.80px;width:27.2px;height:1px;background:#666"></div>
<div class="a" style="left:86.2px;top:302.50px;width:0.7px;height:11px;background:#444"></div>
<div class="a" style="left:88.2px;top:303.15px;width:36.8px;height:0.9px;background:#777"></div>
<div class="t" style="left:88.20px;top:307.24px;font-size:5.3px;letter-spacing:-0.143px;color:#0f0f0f;font-weight:bold">Aga Adi Winawan</div>
<div class="a" style="left:71px;top:318.80px;width:28.0px;height:0.8px;background:#8a8a8a"></div>
<div class="a" style="left:58.5px;top:321.15px;width:52.5px;height:0.7px;background:#9a9a9a"></div>
<div class="a" style="left:67px;top:325.65px;width:35.0px;height:1.1px;background:#3f3f3f"></div>
<div class="a" style="left:77px;top:328.05px;width:16.0px;height:1.1px;background:#3f3f3f"></div>
<div class="a" style="left:71.5px;top:331.20px;width:28.0px;height:0.8px;background:#8a8a8a"></div>
<svg style="left:43px;top:329px" width="26" height="12" viewBox="0 0 26 12" fill="none"><circle cx="7" cy="8" r="5" stroke="#9ab59a" stroke-width=".5"/><path d="M5 5c4-2 8-3 13-3M7 9c3-3 6-4 10-4M8 3l-1 7" stroke="#eef03a" stroke-width="1.600" stroke-linecap="round" opacity=".9"/><circle cx="7.500" cy="8" r="1.100" fill="#2fb84e"/></svg>
<div class="a" style="left:52px;top:340.15px;width:6.5px;height:0.7px;background:#777"></div>
<div class="a" style="left:46px;top:342.25px;width:18.5px;height:0.7px;background:#888"></div>
<div class="a" style="left:49px;top:344.25px;width:12.5px;height:0.7px;background:#888"></div>
<svg style="left:103px;top:329px" width="26" height="16" viewBox="0 0 26 16" fill="none"><circle cx="7.600" cy="8.500" r="5.600" stroke="#6a6a72" stroke-width=".9"/><circle cx="7.600" cy="8.500" r="3.600" stroke="#7a7a82" stroke-width=".6"/><path d="M8 9c2-3 5-6 8-7l-1 6M14 6c2-2 5-3 7-4" stroke="#eef03a" stroke-width="1.500" stroke-linecap="round" opacity=".9"/></svg>
<div class="a" style="left:112px;top:340.15px;width:10.0px;height:0.7px;background:#777"></div>
<div class="a" style="left:106px;top:342.25px;width:22.0px;height:0.7px;background:#888"></div>
<div class="a" style="left:104px;top:344.25px;width:25.5px;height:0.7px;background:#888"></div>
<!-- slide -->
<div class="a" style="left:304px;top:267px;width:389.500px;height:285px;background:#fff"></div>
<div class="a" style="left:304px;top:273px;width:389.500px;height:275px;overflow:hidden;background:linear-gradient(95deg,#d8d3ce 0,#e2dedb 18%,#efedeb 42%,#ebe8e5 62%,#dfdbd7 82%,#d9d5d0 100%)">
  <div class="a" style="left:-40px;top:90px;width:260px;height:90px;background:#f3f2f0;filter:blur(22px);opacity:.8;transform:rotate(-22deg)"></div>
  <div class="a" style="left:180px;top:-30px;width:160px;height:90px;background:#f4f3f1;filter:blur(22px);opacity:.8;transform:rotate(-12deg)"></div>
  <div class="a" style="left:120px;top:170px;width:90px;height:130px;background:#d5d0cb;filter:blur(18px);opacity:.6;transform:rotate(20deg)"></div>
  <div class="a" style="left:250px;top:190px;width:200px;height:120px;background:#f0eeec;filter:blur(22px);opacity:.7"></div>
</div>
<div class="t" style="left:332.00px;top:321.60px;font-size:10.2px;letter-spacing:0.866px;color:#2d2b2a">Duta Inisiatif Indonesia</div>
<div class="t" style="left:332.00px;top:336.06px;font-size:7.2px;letter-spacing:0.723px;color:#2d2b2a">No: 034/Duta.Inisiatif-GZI/V/2023</div>
<div class="t" style="left:330.00px;top:359.55px;font-size:27.6px;transform:scaleX(0.8732);transform-origin:0 50%;color:#3a3633;font-weight:bold;-webkit-text-stroke:.3px #3a3633">CERTIFICATE</div>
<div class="t" style="left:471.00px;top:387.70px;font-size:7.5px;letter-spacing:6.078px;color:#2d2b2a">OF</div>
<div class="t" style="left:374.50px;top:400.53px;font-size:8.6px;letter-spacing:4.513px;color:#2d2b2a">APPRECIATION</div>
<div class="a" style="left:498px;top:357px;width:1px;height:46px;background:#4a4643"></div>
<div class="t" style="left:507.00px;top:360.70px;font-size:10.0px;letter-spacing:0.941px;color:#222">This certificate is awarded to</div>
<div class="t" style="left:507.00px;top:382.54px;font-size:17.8px;transform:scaleX(1.1863);transform-origin:0 50%;color:#0a0a0a;font-weight:bold;-webkit-text-stroke:.35px #0a0a0a">Aga Adi Winawan</div>
<!-- logos -->
<svg style="left:593px;top:294.500px" width="35" height="35" viewBox="0 0 35 35"><circle cx="17.500" cy="17.500" r="16.800" fill="#7db8e8" stroke="#f2f2f2" stroke-width="1.400"/><circle cx="17.500" cy="17.500" r="14.500" fill="#8cc4ee"/><path d="M5 16.500h25v3H5z" fill="#fff"/><path d="M5 17.500h25v1.200H5z" fill="#d9534f"/><circle cx="17.500" cy="10.500" r="3" fill="#e8c23a"/><path d="M14.500 8.500h6l-1-2.500h-4z" fill="#c0392b"/><path d="M12.500 13.500h10l1.500 3h-13z" fill="#8a6d3b"/><path d="M10 23h15l-2 5.500H12z" fill="#f0c419"/><path d="M11 26h13l-1 2.500H12z" fill="#d35400"/></svg>
<svg style="left:631px;top:293px" width="36" height="41" viewBox="0 0 36 41"><path d="M9 28l-4.500 11 5-2 3 3.500 3.500-10zM27 28l4.500 11-5-2-3 3.500-3.500-10z" fill="#70756c"/><path d="M18 .8l3 1.800 3.500-.3 1.800 3 3.200 1.400.2 3.500L32 13l-1 3.400 1 3.400-2.300 2.700-.2 3.500-3.200 1.500-1.800 3-3.500-.3-3 1.800-3-1.800-3.500.3-1.800-3-3.200-1.500-.2-3.500L4 19.800l1-3.400L4 13l2.300-2.800.2-3.500 3.200-1.400 1.800-3 3.500.3z" fill="#5f6a5b"/><circle cx="18" cy="16.400" r="11" fill="#55614f" stroke="#6f7d68" stroke-width=".8"/><path d="M14 12c2 0 3 1.500 3 3.500S16 19 14.500 19 12.500 18 12.500 16 13 12 14 12zM22 12c1 0 1.500 2 1.500 4s-1 3-2.500 3-2-1.500-2-3.500 1-3.500 3-3.500z" fill="#3fbf5a"/><path d="M14.500 19v2.500M21.500 19v2.500M11.500 22.500h13" stroke="#3fbf5a" stroke-width=".8"/></svg>
<div class="t" style="left:434.70px;top:424.53px;font-size:8.6px;letter-spacing:0.206px;color:#1f1f1f;font-style:italic">As A Momentous Speaker at:</div>
<div class="t" style="left:383.00px;top:435.71px;font-size:6.9px;letter-spacing:0.390px;color:#2a2a2a">Mentoring of Duta Inisiatif Indonesia, Greenzinitiative Indonesia</div>
<div class="t" style="left:419.50px;top:453.80px;font-size:7.5px;letter-spacing:0.211px;color:#111;font-weight:bold">Leadership: Combo of Art &amp; Science in</div>
<div class="t" style="left:458.50px;top:464.40px;font-size:7.5px;letter-spacing:0.322px;color:#111;font-weight:bold">Mobilizing People</div>
<div class="t" style="left:433.00px;top:476.58px;font-size:8.5px;letter-spacing:0.343px;color:#2a2a2a">Conducted on 29th July 2023</div>
<!-- left signature -->
<svg style="left:326px;top:476px" width="96" height="52" viewBox="0 0 96 52" fill="none"><circle cx="23.300" cy="26.200" r="22.500" stroke="#8aa08e" stroke-width=".8"/><circle cx="23.300" cy="26.200" r="15" stroke="#a9c4a9" stroke-width=".6"/><circle cx="23.300" cy="27" r="9" stroke="#b9d39a" stroke-width=".8" stroke-dasharray="2 1"/><path d="M19.500 23c1.700 0 2.300 1.600 2.300 3.200s-1 2.800-2.200 2.800-1.800-1.200-1.800-2.800.6-3.200 1.700-3.200zM26 23c1.200 0 1.800 1.600 1.800 3.200s-.9 2.800-2 2.800-1.700-1.200-1.700-2.800.6-3.200 1.900-3.200z" fill="#28b446"/><g stroke="#f5f01f" stroke-linecap="round" stroke-linejoin="round" opacity=".92"><path d="M25 9c-3 6-3 14-1 22l1 15" stroke-width="3"/><path d="M13 22c4-5 11-3 13 2" stroke-width="2.500"/><path d="M31 28l6-9 2 12 6-12 3 12 4-9" stroke-width="2.600"/><path d="M54 31c-2-15 2-27 5-27 3 0 0 16-3 27v16" stroke-width="3"/><path d="M58 22c4-2 8-1 10 0 4-4 12-8 20-11" stroke-width="2.400"/></g><path d="M7.200 32.400h71.600" stroke="#2a2a2a" stroke-width=".9"/></svg>
<div class="t" style="left:351.50px;top:513.11px;font-size:6.9px;letter-spacing:0.297px;color:#222">Founder of</div>
<div class="t" style="left:330.70px;top:522.31px;font-size:6.9px;letter-spacing:0.215px;color:#222">Duta Inisiatif Indonesia,</div>
<div class="t" style="left:343.70px;top:531.11px;font-size:6.9px;letter-spacing:0.326px;color:#222">Muhamad Yani</div>
<!-- right signature -->
<svg style="left:574px;top:474px" width="100" height="66" viewBox="0 0 100 66" fill="none"><circle cx="32.600" cy="34" r="28.600" stroke="#5a5a68" stroke-width="1.200"/><circle cx="32.600" cy="34" r="26" stroke="#73737f" stroke-width=".6"/><circle cx="32.600" cy="34" r="19.500" stroke="#5a5a68" stroke-width="1"/><circle cx="32.600" cy="34" r="23" stroke="#6a6a78" stroke-width="2.600" stroke-dasharray="1.200 1.600" opacity=".7"/><path d="M29 22l2.500-4.500 3 4 5-1.500-1.500 5 3.500 3.500-5 1.500-2 5-3.500-4-5 1 2-5-4-3.500zM24 42l-4-14 5 3M41 42l2-14 4-3M22 42h22l-2 8-20 2z" stroke="#5a5a68" stroke-width="1"/><g stroke="#f5f01f" stroke-linecap="round" stroke-linejoin="round" opacity=".92"><path d="M25 24c2 6 6 12 12 12 4 0 7-2 9-5" stroke-width="2.600"/><path d="M48 37c2-10 6-20 10-26l4 20c2-10 6-18 12-22l-3 26" stroke-width="3"/><path d="M74 9c6-2 12-4 16-6" stroke-width="2.200"/></g><path d="M18 34.400h71.300" stroke="#2a2a2a" stroke-width=".9"/></svg>
<div class="t" style="left:607.00px;top:513.11px;font-size:6.9px;letter-spacing:0.245px;color:#222">Chairman of</div>
<div class="t" style="left:583.00px;top:522.31px;font-size:6.9px;letter-spacing:0.154px;color:#222">Yayasan Dwi Putra Bangsa,</div>
<div class="t" style="left:576.30px;top:531.11px;font-size:6.9px;letter-spacing:0.264px;color:#222">Pandi Ahmad Pratama, M.Kom</div>
<!-- vertical scrollbar -->
<div class="a" style="left:847px;top:268px;width:11px;height:287px;background:#ebebeb"></div>
<div class="a" style="left:848px;top:268.500px;width:9px;height:10px;background:#fff;border:1px solid #cfcfcf"></div>
<svg style="left:850px;top:271.500px" width="5" height="4" viewBox="0 0 5 4"><path d="M2.500 0L5 4H0z" fill="#444"/></svg>
<div class="a" style="left:848.500px;top:333px;width:8px;height:113px;background:#fff;border:1px solid #d2d2d2"></div>
<div class="a" style="left:848px;top:509px;width:9px;height:10px;background:#fff;border:1px solid #cfcfcf"></div>
<svg style="left:850px;top:512px" width="5" height="4" viewBox="0 0 5 4"><path d="M0 0h5L2.500 4z" fill="#444"/></svg>
<svg style="left:850px;top:521.500px" width="5" height="7" viewBox="0 0 5 7"><path d="M2.500 0L5 3.500H0zM2.500 3.500L5 7H0z" fill="#555"/></svg>
<svg style="left:850px;top:531.500px" width="5" height="7" viewBox="0 0 5 7"><path d="M0 0h5L2.500 3.500zM0 3.500h5L2.500 7z" fill="#555"/></svg>
<!-- notes -->
<div class="a" style="left:148px;top:554.500px;width:710px;height:1px;background:#cfcfcf"></div>
<div class="t" style="left:156.00px;top:560.38px;font-size:10.8px;letter-spacing:0.337px;color:#666">Klik untuk menambah catatan</div>
<div class="a" style="left:848px;top:556.500px;width:9px;height:9px;background:#fff;border:1px solid #cfcfcf"></div>
<svg style="left:850px;top:559.500px" width="5" height="3" viewBox="0 0 5 3"><path d="M2.500 0L5 3H0z" fill="#444"/></svg>
<div class="a" style="left:848px;top:565.500px;width:9px;height:9px;background:#fff;border:1px solid #cfcfcf"></div>
<svg style="left:850px;top:568.500px" width="5" height="3" viewBox="0 0 5 3"><path d="M0 0h5L2.500 3z" fill="#444"/></svg>
<!-- status bar -->
<div class="a" style="left:16px;top:575px;width:842px;height:16px;background:#f3f3f3;border-top:1px solid #dcdcdc"></div>
<div class="t" style="left:20.00px;top:579.08px;font-size:8.5px;letter-spacing:-0.240px;color:#555">Slide 1 dari 1</div>
<svg style="left:80px;top:579px" width="12" height="9" viewBox="0 0 12 9" fill="none" stroke="#777" stroke-width=".9"><path d="M.5.500h4.500v8H.5zM5 .5h3M5 8.500h5.500v-4M7.500 5.500l1 1.200 2.500-4"/></svg>
<div class="t" style="left:102.00px;top:579.08px;font-size:8.5px;letter-spacing:-0.204px;color:#555">Bahasa Indonesia</div>
<svg style="left:178px;top:578px" width="12" height="11" viewBox="0 0 12 11" fill="none" stroke="#555" stroke-width="1"><path d="M5.500 1.500A4 4 0 1 0 5.500 9.500"/><path d="M6.500 4.500l4.500 5M11 4.500l-4.500 5M5 3.500h3M6.500 2v3"/></svg>
<div class="t" style="left:191.50px;top:579.08px;font-size:8.5px;letter-spacing:-0.292px;color:#555">Aksesibilitas: Selidiki</div>
<svg style="left:480px;top:579px" width="9" height="9" viewBox="0 0 9 9"><path d="M4.500 0L8 3.500H1z" fill="#666"/><path d="M0 5h9M0 7h9" stroke="#666" stroke-width=".9"/></svg>
<div class="t" style="left:491.80px;top:579.08px;font-size:8.5px;letter-spacing:-0.097px;color:#555">Catatan</div>
<svg style="left:533px;top:578.500px" width="12" height="10" viewBox="0 0 12 10"><path d="M0 0h12v7H4.500L2 9.500V7H0z" fill="#555"/></svg>
<div class="t" style="left:546.80px;top:579.08px;font-size:8.5px;letter-spacing:-0.023px;color:#555">Komentar</div>
<svg style="left:604px;top:578.500px" width="10" height="10" viewBox="0 0 10 10" fill="none" stroke="#777" stroke-width=".9"><path d="M.5.500h9M.5.500v9M3 3h6.500v6.500H3zM3 5.500h6"/></svg>
<svg style="left:631px;top:578.500px" width="10" height="10" viewBox="0 0 10 10" fill="none" stroke="#777" stroke-width=".9"><path d="M.5.500h3.500v3.500H.5zM6 .5h3.500v3.500H6zM.5 6h3.500v3.500H.5zM6 6h3.500v3.500H6z"/></svg>
<svg style="left:658px;top:578.500px" width="11" height="10" viewBox="0 0 11 10" fill="none" stroke="#777" stroke-width=".9"><path d="M.5 1h4.500v7.500H.5zM6 1h4.500v7.500H6zM1.500 3h2.500M1.500 5h2.500M7 3h2.500M7 5h2.500"/></svg>
<div class="a" style="left:677.500px;top:576px;width:25px;height:15px;background:#c9c9c9"></div>
<svg style="left:684.500px;top:578.500px" width="11" height="10" viewBox="0 0 11 10" fill="none" stroke="#555" stroke-width=".9"><path d="M0 .5h11M1 .5v5h9V.5M5.500 5.500v2.500M3 8.500h5"/></svg>
<div class="a" style="left:709px;top:583px;width:5px;height:1px;background:#555"></div>
<div class="a" style="left:718px;top:583px;width:78px;height:1px;background:#9a9a9a"></div>
<div class="a" style="left:741px;top:578.500px;width:3px;height:10px;background:#555"></div>
<div class="a" style="left:756px;top:581px;width:1px;height:5px;background:#777"></div>
<svg style="left:798.500px;top:580.500px" width="6" height="6" viewBox="0 0 6 6"><path d="M3 0v6M0 3h6" stroke="#555" stroke-width="1"/></svg>
<div class="t" style="left:813.00px;top:579.18px;font-size:8.3px;letter-spacing:-0.805px;color:#555">66%</div>
<svg style="left:844px;top:579px" width="9" height="9" viewBox="0 0 9 9" fill="none" stroke="#777" stroke-width=".9"><path d="M.5.500h8v8h-8zM4.500 2v5M2 4.500h5"/></svg>
<!-- bottom rounded corners of ppt come from container -->
<!-- floating reactions -->
<svg width="0" height="0" style="left:0;top:0"><defs>
<radialGradient id="hg" cx="35%" cy="30%" r="80%"><stop offset="0" stop-color="#ff8ec0"/><stop offset=".55" stop-color="#f2509a"/><stop offset="1" stop-color="#d93a86"/></radialGradient>
<symbol id="hrt" viewBox="0 0 24 24"><path d="M12 22C7 18.500 1 13.500 1 8a5.700 5.700 0 0 1 11-2.300A5.700 5.700 0 0 1 23 8c0 5.500-6 10.500-11 14z" fill="url(#hg)"/><path d="M8 9l1 2.800L11.800 13 9 14l-1 2.900L7 14l-2.800-1L7 11.800zM16.500 4.500l.7 2 2 .7-2 .7-.7 2-.7-2-2-.7 2-.7zM15.500 13l.5 1.400 1.400.5-1.400.5-.5 1.400-.5-1.400-1.400-.5 1.400-.5z" fill="#ffe14d"/></symbol>
</defs></svg>
<svg style="left:137.800px;top:335.600px" width="21.600" height="21.600"><use href="#hrt" width="21.600" height="21.600"/></svg>
<svg style="left:208.500px;top:347.500px" width="27" height="27"><use href="#hrt" width="27" height="27"/></svg>
<div class="pill" style="left:81px;top:363.700px;width:135.500px">712_Zabila Saputri</div>
<div class="pill" style="left:154.300px;top:382px;width:136.200px">712_Zabila Saputri</div>
<svg style="left:250px;top:431px" width="21" height="21"><use href="#hrt" width="21" height="21"/></svg>
<div class="pill" style="left:192px;top:459px;width:136.500px">712_Zabila Saputri</div>
<svg style="left:159.500px;top:504.500px" width="25" height="26"><use href="#hrt" width="25" height="26"/></svg>
<svg style="left:179.500px;top:511px" width="22" height="24"><use href="#hrt" width="22" height="24"/></svg>
<div class="pill" style="left:104px;top:537.800px;width:136px">712_Zabila Saputri</div>
<div class="pill" style="left:120px;top:543px;width:137px">712_Zabila Saputri</div>
<svg style="left:118.800px;top:576.300px" width="27.500" height="27.500"><use href="#hrt" width="27.500" height="27.500"/></svg>



</div>
</div>

<!-- ===== MEET: tiles ===== -->
<svg width="0" height="0" style="left:0;top:0"><defs>
<symbol id="micoff" viewBox="0 0 24 24"><path fill="#fff" d="M19 11h-1.700c0 .74-.16 1.430-.43 2.050l1.230 1.230c.56-.98.9-2.090.9-3.280zm-4.020.17c0-.06.020-.11.020-.17V5c0-1.660-1.340-3-3-3S9 3.340 9 5v.18l5.980 5.990zM4.270 3L3 4.270l6.010 6.010V11c0 1.660 1.330 3 2.990 3 .22 0 .44-.03.65-.08l1.660 1.660c-.71.330-1.500.52-2.310.52-2.760 0-5.300-2.100-5.300-5.100H5c0 3.410 2.720 6.230 6 6.720V21h2v-3.280c.91-.13 1.770-.45 2.540-.9L19.730 21 21 19.730 4.270 3z"/></symbol>
<filter id="b1" x="-20%" y="-20%" width="140%" height="140%"><feGaussianBlur stdDeviation="1.200"/></filter>
<filter id="b2" x="-20%" y="-20%" width="140%" height="140%"><feGaussianBlur stdDeviation="2.500"/></filter>
<filter id="b4" x="-30%" y="-30%" width="160%" height="160%"><feGaussianBlur stdDeviation="5"/></filter>
</defs></svg>

<!-- tile 1 : Shabil Ramadhan -->
<div class="tile" style="left:874px;top:167px;width:151px;height:126px">
 <svg style="left:36px;top:0;overflow:hidden" width="78" height="126" viewBox="0 0 78 126">
  <rect x="-6" y="-6" width="90" height="140" fill="#dccb66"/>
  <rect x="-6" y="-6" width="90" height="40" fill="#d5d5ad"/>
  <rect x="-6" y="26" width="90" height="14" fill="#dcd590" filter="url(#b2)"/>
  <rect x="12" y="-4" width="4" height="70" fill="#f0f0dc" opacity=".75" filter="url(#b1)"/>
  <path d="M-4 46l11-1-3 27-8 1zM69 44l12 1v29l-12-2z" fill="#35352d" filter="url(#b1)"/>
  <path d="M-2 50l6-.5-2 19-4 1zM72 48l8 1v21l-8-1z" fill="#d9d9d2" filter="url(#b1)"/>
  <path d="M16 62c-2-12 2-22 10-28h34c8 8 9 20 7 32-1 14-10 28-24 30-14-2-25-14-27-34z" fill="#b38d75" filter="url(#b1)"/>
  <path d="M18 70c4 12 12 22 25 24 12-2 20-10 23-24-2 8-10 14-23 14-12 0-21-6-25-14z" fill="#9c7460" opacity=".8" filter="url(#b2)"/>
  <path d="M12 64c-8-26 6-46 32-46 22 0 32 12 30 32-1 7-3 11-6 14 1-14-4-22-14-24-10 6-22 8-34 4-4 4-7 12-8 20z" fill="#26262a" filter="url(#b1)"/>
  <path d="M24 60c4-2 8-2 12 0M50 60c4-2 8-2 11 0" stroke="#3a2a24" stroke-width="2" fill="none" filter="url(#b1)"/>
  <path d="M26 66h9M51 66h8" stroke="#2e2320" stroke-width="2.600" filter="url(#b1)"/>
  <path d="M41 64c-1 6-3 10-3 13 2 2 7 2 9 0" stroke="#8f6652" stroke-width="1.600" fill="none" filter="url(#b1)"/>
  <ellipse cx="43" cy="85" rx="9" ry="3" fill="#a0655a" filter="url(#b1)"/>
  <path d="M-6 92c10-8 20-8 28-5 6 9 30 11 40 0 8-3 14-2 22 2v45H-6z" fill="#2b2e33" filter="url(#b1)"/>
 </svg>
</div>
<div class="t" style="left:889.70px;top:264.18px;font-size:13.7px;letter-spacing:-0.076px;color:#fff;font-weight:bold;text-shadow:0 0 3px rgba(0,0,0,.6)">Shabil Ramadhan</div>

<!-- tile 2 : Aga Adi Winawan -->
<div class="tile" style="left:1037px;top:167px;width:151px;height:126px">
 <svg style="left:0;top:0;overflow:hidden" width="151" height="126" viewBox="0 0 151 126">
  <defs><linearGradient id="sky" x1="0" y1="0" x2="0" y2="1"><stop offset="0" stop-color="#8dbde6"/><stop offset=".3" stop-color="#b4d2ea"/><stop offset=".52" stop-color="#d3e2ec"/><stop offset=".6" stop-color="#c3d6df"/><stop offset=".66" stop-color="#b9cdd2"/><stop offset=".72" stop-color="#d2c4a8"/><stop offset=".84" stop-color="#b39f84"/><stop offset=".93" stop-color="#5c5044"/><stop offset="1" stop-color="#332e2a"/></linearGradient></defs>
  <rect x="-5" y="-5" width="161" height="136" fill="url(#sky)"/>
  <ellipse cx="112" cy="22" rx="38" ry="9" fill="#e6eff7" opacity=".75" filter="url(#b2)"/>
  <ellipse cx="126" cy="52" rx="32" ry="9" fill="#eef3f7" opacity=".85" filter="url(#b2)"/>
  <ellipse cx="70" cy="14" rx="26" ry="6" fill="#dbe8f3" opacity=".6" filter="url(#b2)"/>
  <!-- rock arch -->
  <path d="M-5 14c10 2 20 8 30 18 10 6 20 12 26 22 4 8 4 18 2 30l-8 2c0-16-6-26-16-26-8 2-12 12-10 26l4 8-28 8z" fill="#70654c" filter="url(#b1)"/>
  <path d="M-5 40c8 0 14 6 18 14 2 10 0 24-4 34l-14 6z" fill="#57522f" filter="url(#b1)"/>
  <path d="M18 34c8 2 18 8 24 14l-6 4c-6-4-12-6-18-6z" fill="#8b7c62" filter="url(#b1)"/>
  <ellipse cx="35" cy="68" rx="9" ry="11" fill="#e3ebee" filter="url(#b1)"/>
  <!-- palms -->
  <path d="M-5 62C8 46 22 24 34 -5l5 0C30 26 14 50-2 70zM4 70C18 52 30 30 40 6l4 2C36 34 24 56 10 76z" fill="#5d5832" filter="url(#b1)"/>
  <path d="M10 8C20 0 34-4 50 2c6 6 10 12 12 22C54 16 46 10 36 10 28 10 18 12 8 18zM-5 -5h26c-6 6-14 10-26 14z" fill="#48562a" filter="url(#b1)"/>
  <path d="M40 8c8 6 12 16 12 28-4-8-10-14-18-18z" fill="#56642e" filter="url(#b1)"/>
  <path d="M-5 96c12-8 26-12 42-10 4 2 6 4 6 8l-12 6-36 10z" fill="#37332b" filter="url(#b1)"/>
  <path d="M41 84h15l-2 5H44z" fill="#9c3a2d" filter="url(#b1)"/>
  <path d="M46 70l2 14" stroke="#4a4a3a" stroke-width="1.500" filter="url(#b1)"/>
  <!-- right rocks -->
  <path d="M126 80c4-8 12-16 30-22v26z" fill="#a59c82" filter="url(#b1)"/>
  <path d="M138 -5h18v48c-6-6-8-12-6-20-3-10-6-18-12-28z" fill="#8a9440" opacity=".75" filter="url(#b1)"/>
  <path d="M-5 104c12-8 28-10 44-6l-4 33H-5z" fill="#2a2723" filter="url(#b2)"/>
  <path d="M120 112c8-6 20-8 36-4v24h-36z" fill="#4a4034" filter="url(#b2)"/>
  <!-- person -->
  <path d="M12 131c2-18 16-30 42-35 8 9 36 11 48 0 28 5 44 15 52 35z" fill="#3a2d28" filter="url(#b1)"/>
  <path d="M66 84h26v16c-8 6-18 6-26 0z" fill="#a77d5e" filter="url(#b1)"/>
  <path d="M55 62c0-18 10-28 24-28s25 10 25 28c0 18-10 30-25 31-14-1-24-13-24-31z" fill="#bb9472" filter="url(#b1)"/>
  <path d="M56 66c2 14 10 26 23 27 14-1 22-12 25-27-3 10-12 16-25 16-12 0-20-6-23-16z" fill="#a67d5e" opacity=".8" filter="url(#b2)"/>
  <path d="M53 64c-5-24 5-43 27-43 20 0 30 14 26 40-2-10-6-18-12-20-11 3-23 3-33 0-5 6-7 13-8 23z" fill="#2a2622" filter="url(#b1)"/>
  <path d="M62 58c4-2 8-2 11 0M85 58c4-2 8-2 11 0" stroke="#3a2c20" stroke-width="1.800" fill="none" filter="url(#b1)"/>
  <path d="M63 63h9M86 63h9" stroke="#32261c" stroke-width="2.200" filter="url(#b1)"/>
  <path d="M78 62c-1 5-3 9-3 12 2 2 7 2 9 0" stroke="#96694c" stroke-width="1.500" fill="none" filter="url(#b1)"/>
  <path d="M68 79c7 3 15 3 22 0-2 6-6 9-11 9s-9-3-11-9z" fill="#f3eee8" filter="url(#b1)"/>
  <path d="M66 78c8 3 18 3 26 0" stroke="#8a5444" stroke-width="1.300" fill="none" filter="url(#b1)"/>
 </svg>
</div>
<div class="mute" style="left:1150px;top:178.500px;width:25.500px;height:25.500px;background:rgba(93,112,138,.88)"></div>
<svg style="left:1154.500px;top:183px" width="16.500" height="16.500"><use href="#micoff" width="16.500" height="16.500"/></svg>
<div class="t" style="left:1053.00px;top:264.18px;font-size:13.7px;letter-spacing:0.035px;color:#fff;font-weight:bold;text-shadow:0 0 3px rgba(0,0,0,.6)">Aga Adi Winawan</div>

<!-- tile 3 : 067_PUTRI -->
<div class="tile" style="left:1200px;top:167px;width:150px;height:126px">
 <svg style="left:0;top:0;overflow:hidden" width="150" height="126" viewBox="0 0 150 126">
  <defs><radialGradient id="gr3" cx="64%" cy="58%" r="62%"><stop offset="0" stop-color="#48600f"/><stop offset=".55" stop-color="#33440b"/><stop offset="1" stop-color="#1c2607"/></radialGradient></defs>
  <rect x="-5" y="-5" width="160" height="136" fill="url(#gr3)"/>
  <rect x="34" y="-4" width="30" height="16" fill="#8d8d84" filter="url(#b1)"/>
  <rect x="-4" y="-4" width="22" height="60" fill="#2e3e0c" filter="url(#b2)"/>
  <path d="M-4 40c6 0 10 6 10 16s-3 22-10 26z" fill="#2b8a3a" opacity=".75" filter="url(#b1)"/>
  <rect x="-4" y="84" width="16" height="18" fill="#8a9f3e" opacity=".7" filter="url(#b2)"/>
  <!-- hijab back -->
  <path d="M6 74C0 40 12 9 40 9c26 0 42 24 42 58 0 14-2 24-6 32l36 16 14 16H-5V98z" fill="#353c4c" filter="url(#b1)"/>
  <path d="M42 10c16 10 28 28 32 56" stroke="#566074" stroke-width="3" fill="none" filter="url(#b1)"/>
  <!-- face -->
  <path d="M13 58c0-26 12-42 28-44 14 6 28 24 31 50 0 22-12 38-29 40-18-2-30-20-30-46z" fill="#ab7f62" filter="url(#b1)"/>
  <path d="M14 50c2-18 10-30 24-34-4 10-8 22-8 40 0 16 4 30 12 46-16-4-28-22-28-52z" fill="#ba8d6e" opacity=".8" filter="url(#b2)"/>
  <path d="M50 30c10 8 18 20 20 36-2 18-10 30-24 36 10-12 14-26 14-40 0-12-4-24-10-32z" fill="#8c6248" opacity=".7" filter="url(#b2)"/>
  <path d="M20 42c4-3 9-3 13-1M44 44c5-3 10-2 14 1" stroke="#3a2820" stroke-width="2" fill="none" filter="url(#b1)"/>
  <path d="M22 49c3-2 8-2 11 0M46 51c4-2 8-2 12 0" stroke="#22160f" stroke-width="3" fill="none" filter="url(#b1)"/>
  <path d="M37 50c-2 8-5 14-5 18 3 3 9 3 12 0" stroke="#8a5c44" stroke-width="1.800" fill="none" filter="url(#b1)"/>
  <ellipse cx="37" cy="80" rx="11" ry="3.200" fill="#8e5a4c" filter="url(#b1)"/>
  <!-- hijab front / shoulders -->
  <path d="M-5 90c14 6 32 12 48 12 12 0 24-4 32-10l38 20 12 24H-5z" fill="#2d3341" filter="url(#b1)"/>
  <path d="M4 60c0 16 4 30 12 40l-10 2c-6-12-8-26-6-40z" fill="#323949" filter="url(#b1)"/>
 </svg>
 <div class="t" style="left:88.500px;top:7.500px;font-size:16.500px;font-weight:bold;color:#f6f8d2;transform:scaleX(.71);transform-origin:0 0;text-shadow:0 0 3px #d4e64a,0 0 1px #e6f06a">MENTORING</div>
 <div class="t" style="left:83px;top:24.500px;font-size:8.500px;font-weight:bold;color:#f0f3bc;transform:scaleX(.7);transform-origin:0 0;text-shadow:0 0 2px #cfe24a">DUTA INISIATIF INDONESIA</div>
 <div class="a" style="left:88px;top:35.500px;width:62px;height:1.500px;background:#c8cf9a;opacity:.5"></div>
</div>
<svg style="left:1316.500px;top:183px" width="16.500" height="16.500"><use href="#micoff" width="16.500" height="16.500"/></svg>
<div class="t" style="left:1216.00px;top:264.18px;font-size:13.7px;letter-spacing:-0.064px;color:#fff;font-weight:bold;text-shadow:0 0 3px rgba(0,0,0,.6)">067_PUTRI</div>

<!-- tile 4 : Erbin Swara -->
<div class="tile" style="left:874px;top:305px;width:151px;height:125px"></div>
<div class="a" style="left:927px;top:345px;width:45px;height:45px;border-radius:50%;overflow:hidden;background:#1e9ff0">
 <svg style="left:0;top:0" width="45" height="45" viewBox="0 0 45 45"><ellipse cx="23" cy="19" rx="8.500" ry="10.500" fill="#c9a48c"/><path d="M14 16c-1-8 3-12 9-12s10 3 9 12c-1-4-3-6-5-6-3 1-7 1-10 0-1 1-2 3-3 6z" fill="#1a1a1e"/><path d="M3 45c2-9 8-11 14-13l6 6 6-6c6 2 12 4 14 13z" fill="#1d2b45"/><path d="M17 32l6 8 6-8-2-3h-8z" fill="#f4f6f8"/><path d="M21.500 35h3l1 10h-5z" fill="#2b4a7a"/></svg>
</div>
<div class="mute" style="left:987.500px;top:317px;width:25px;height:25px;background:#2d3033"></div>
<svg style="left:992px;top:321.500px" width="16" height="16"><use href="#micoff" width="16" height="16"/></svg>
<div class="t" style="left:890.00px;top:401.18px;font-size:13.7px;letter-spacing:-0.113px;color:#fff;font-weight:bold">Erbin Swara</div>

<!-- tile 5 : 712_Zabila Saputri -->
<div class="tile" style="left:1037px;top:305px;width:151px;height:125px">
 <svg style="left:37px;top:0;overflow:hidden" width="78" height="126" viewBox="0 0 78 126">
  <rect x="-5" y="-5" width="88" height="136" fill="#e3e1c4"/>
  <rect x="56" y="-5" width="27" height="106" fill="#f1f1ee"/>
  <path d="M60 -5v101M70 -5v101M56 14h27M56 40h27M56 66h27" stroke="#d0d2cc" stroke-width="3" filter="url(#b1)"/>
  <rect x="62" y="-4" width="6" height="98" fill="#cfd9e2" opacity=".6" filter="url(#b1)"/>
  <rect x="68" y="50" width="5" height="46" fill="#9db36a" opacity=".8" filter="url(#b1)"/>
  <rect x="-4" y="30" width="46" height="4" fill="#c79358" filter="url(#b1)"/>
  <rect x="38" y="32" width="4" height="16" fill="#c79358" filter="url(#b1)"/>
  <path d="M13 24c0-10 3-14 6-14s5 4 5 14z" fill="#a9c46c" filter="url(#b1)"/>
  <ellipse cx="18.500" cy="27" rx="6" ry="4" fill="#c99a2a" filter="url(#b1)"/>
  <path d="M25 22c2-6 12-6 16 0v2H25z" fill="#e98aa0" filter="url(#b1)"/>
  <path d="M27 24h12l-1.500 7h-9z" fill="#e0a070" filter="url(#b1)"/>
  <path d="M-4 22c6 0 8 4 6 8h-6z" fill="#8fb05a" filter="url(#b1)"/>
  <rect x="2" y="38" width="4" height="20" fill="#d8dde0" filter="url(#b1)"/><rect x="7" y="36" width="4" height="22" fill="#e8ebe6" filter="url(#b1)"/><rect x="12" y="38" width="3" height="18" fill="#d9c7a6" filter="url(#b1)"/>
  <rect x="-4" y="58" width="14" height="3" fill="#c79358" filter="url(#b1)"/>
  <path d="M-4 74c8 0 10 8 10 18v24h-10z" fill="#a8c060" filter="url(#b1)"/>
  <path d="M60 96c6-2 14 0 22 4v14H60z" fill="#c78a52" filter="url(#b1)"/>
  <path d="M6 84c-4-26 8-44 28-44 18 0 30 16 28 40-1 12-2 22-4 30l-8 20H8z" fill="#2a5b8a" filter="url(#b1)"/>
  <path d="M9 84c0-20 10-30 22-32 14 2 24 14 24 34 0 18-10 32-23 33-13-1-23-15-23-35z" fill="#dcb8a2" filter="url(#b1)"/>
  <path d="M10 90c2 16 10 28 22 29 12-1 20-12 23-28-4 12-12 18-23 18s-18-7-22-19z" fill="#c79c88" opacity=".7" filter="url(#b2)"/>
  <path d="M13 67c4-2 8-2 12 0M37 66c4-2 8-2 12 0" stroke="#5a463e" stroke-width="1.600" fill="none" filter="url(#b1)"/>
  <path d="M14 73h10M38 72h10" stroke="#32261f" stroke-width="2.600" filter="url(#b1)"/>
  <path d="M30 72c-1 8-4 13-4 17 3 3 9 3 12 0" stroke="#b98c78" stroke-width="1.800" fill="none" filter="url(#b1)"/>
  <ellipse cx="31" cy="101" rx="10" ry="3" fill="#c0857c" filter="url(#b1)"/>
  <path d="M-5 131v-19c10-2 16 2 20 6 10 4 24 4 34-2 8-6 20-8 34-4v19z" fill="#1c2630" filter="url(#b1)"/>
 </svg>
</div>
<div class="mute" style="left:1049.500px;top:317.500px;width:25px;height:25px;background:#2d3033"></div>
<svg style="left:1054px;top:322.500px" width="16" height="16"><use href="#hrt" width="16" height="16"/></svg>
<div class="mute" style="left:1150.500px;top:317.500px;width:25px;height:25px;background:#2d3033"></div>
<svg style="left:1155px;top:322px" width="16" height="16"><use href="#micoff" width="16" height="16"/></svg>
<div class="t" style="left:1053.00px;top:401.18px;font-size:13.7px;letter-spacing:-0.235px;color:#fff;font-weight:bold;text-shadow:0 0 3px rgba(0,0,0,.6)">712_Zabila Sapu...</div>

<!-- tile 6 : Tim Sukses Dut... -->
<div class="tile" style="left:1200px;top:305px;width:150px;height:125px"></div>
<div class="a" style="left:1252.500px;top:345px;width:45px;height:45px;border-radius:50%;background:#44484b;border:2.600px solid #696d70"></div>
<svg style="left:1257.500px;top:350px" width="35" height="35" viewBox="0 0 35 35" fill="none"><circle cx="17.500" cy="17.500" r="15.500" stroke="#5a5e61" stroke-width=".8"/><circle cx="17.500" cy="17.500" r="11" stroke="#3f9a4c" stroke-width=".7" stroke-dasharray="1.500 1.500" opacity=".8"/><path d="M15 15.500c1.200 0 1.800 1 1.800 2.200s-.7 2.300-1.700 2.300-1.600-1-1.600-2.200.5-2.300 1.500-2.300zM19.800 15.500c1 0 1.700 1 1.700 2.300s-.7 2.200-1.700 2.200-1.600-1-1.600-2.200.6-2.300 1.600-2.300z" fill="#3fd45a"/><path d="M13 21.500h9M14.500 23h6" stroke="#3fbf5a" stroke-width=".7"/></svg>
<div class="mute" style="left:1312.500px;top:317px;width:25px;height:25px;background:#2d3033"></div>
<svg style="left:1317px;top:321.500px" width="16" height="16"><use href="#micoff" width="16" height="16"/></svg>
<div class="t" style="left:1216.50px;top:401.18px;font-size:13.7px;letter-spacing:-0.210px;color:#fff;font-weight:bold">Tim Sukses Dut...</div>

<!-- tile 7 : Ryani Cahya -->
<div class="tile" style="left:874px;top:442px;width:151px;height:126px"></div>
<div class="a" style="left:927px;top:482px;width:45.500px;height:46px;border-radius:50%;overflow:hidden;background:#5a2218">
 <svg style="left:0;top:0;overflow:hidden" width="46" height="46" viewBox="0 0 46 46"><rect width="46" height="46" fill="#57231a"/><rect x="0" y="8" width="9" height="38" fill="#7a2c1e" filter="url(#b1)"/><path d="M30 0h16v22H36z" fill="#c9a248" filter="url(#b1)"/><rect x="36" y="14" width="10" height="5" fill="#d9902e" filter="url(#b1)"/><rect x="36" y="20" width="10" height="10" fill="#b0aab4" filter="url(#b1)"/><rect x="36" y="28" width="10" height="14" fill="#c4508a" filter="url(#b1)"/><path d="M5 40C2 18 8 2 24 2c12 0 18 8 16 24l-4 16-20 2z" fill="#17131a" filter="url(#b1)"/><path d="M15 27c0-12 5-17 12-17 6 0 10 6 10 15 0 11-4 18-10 19-7 0-12-6-12-17z" fill="#dab6a2" filter="url(#b1)"/><path d="M27 10c-6 4-10 12-11 22 0 4 1 8 4 10-2-8 0-16 4-24z" fill="#1b1518" filter="url(#b1)"/><path d="M27 10c4 1 8 5 9 12-2-6-5-9-9-12z" fill="#1b1518" filter="url(#b1)"/><path d="M20 26h6M30 26h5" stroke="#4a3630" stroke-width="1.200" filter="url(#b1)"/><path d="M24 36h7" stroke="#b07a70" stroke-width="1.300" filter="url(#b1)"/><path d="M6 46c2-7 8-9 13-9 5 4 11 4 15 0 4 0 8 2 10 9z" fill="#eceef1" filter="url(#b1)"/></svg>
</div>
<div class="mute" style="left:987.500px;top:454px;width:25px;height:25px;background:#2d3033"></div>
<svg style="left:992px;top:458.500px" width="16" height="16"><use href="#micoff" width="16" height="16"/></svg>
<div class="t" style="left:890.00px;top:539.18px;font-size:13.7px;letter-spacing:-0.147px;color:#fff;font-weight:bold">Ryani Cahya</div>

<!-- tile 8 : 25 lainnya -->
<div class="tile" style="left:1037px;top:442px;width:151px;height:126px"></div>
<div class="a" style="left:1112.500px;top:476px;width:30px;height:30px;border-radius:50%;background:#4f6272"></div>
<div class="t" style="left:1122.00px;top:483.96px;font-size:14.5px;color:#fff">D</div>
<div class="a" style="left:1085.500px;top:476px;width:30px;height:30px;border-radius:50%;background:#ef6c00"></div>
<div class="t" style="left:1095.00px;top:483.96px;font-size:14.5px;color:#fff">U</div>
<div class="t" style="left:1080.00px;top:517.76px;font-size:14.3px;letter-spacing:-0.021px;color:#fff">25 lainnya</div>

<!-- tile 9 : Fatah Martado (active speaker) -->
<div class="tile" style="left:1200px;top:442px;width:150px;height:126px;background:#6a9df4"></div>
<div class="a" style="left:1204px;top:446px;width:142px;height:118px;border-radius:4px;background:#3c4043;overflow:hidden">
 <svg style="left:0;top:16px;overflow:hidden" width="142" height="86" viewBox="0 0 142 86">
  <defs><linearGradient id="g9" x1="0" y1="0" x2="1" y2="0"><stop offset="0" stop-color="#171d07"/><stop offset=".3" stop-color="#262f09"/><stop offset=".52" stop-color="#55660e"/><stop offset=".7" stop-color="#7c9012"/><stop offset="1" stop-color="#8aa014"/></linearGradient></defs>
  <rect width="142" height="86" fill="url(#g9)"/>
  <ellipse cx="112" cy="50" rx="36" ry="34" fill="#98ad18" opacity=".55" filter="url(#b4)"/>
  <circle cx="119" cy="40" r="18" fill="#aab866" opacity=".75" filter="url(#b1)"/>
  <circle cx="119" cy="40" r="12.500" fill="#1f270c"/>
  <circle cx="119" cy="40" r="9" fill="none" stroke="#3fa84c" stroke-width=".7" stroke-dasharray="1.200 1.200"/>
  <path d="M116 36c1.500 0 2 1.200 2 2.500s-.8 2.500-2 2.500-1.800-1-1.800-2.500.6-2.500 1.800-2.500zM122 36c1.200 0 1.800 1.200 1.800 2.500s-.8 2.500-1.900 2.500-1.700-1-1.700-2.500.6-2.500 1.800-2.500z" fill="#36c956"/>
  <circle cx="136.500" cy="7.500" r="7.500" fill="#f2f2ee"/><circle cx="136.500" cy="6.500" r="3" fill="#d9a441"/><path d="M132 9h9" stroke="#c0392b" stroke-width="1"/>
  <path d="M0 0c8 2 12 8 12 14M0 30c6 4 10 12 8 24M0 70c6 0 10 6 12 16M118 86l24-22M124 86l18-16M130 86l12-11" stroke="#c9d46a" stroke-width=".8" fill="none" stroke-dasharray="1.500 1" opacity=".8"/>
  <text transform="translate(66,14) scale(-.66,1)" font-family="Liberation Sans, sans-serif" font-weight="bold" font-size="11.500" fill="#f2f5c0" style="text-shadow:0 0 2px #cfe24a">MENTORING</text>
  <text transform="translate(72,21.500) scale(-.56,1)" font-family="Liberation Sans, sans-serif" font-weight="bold" font-size="7" fill="#eaeeb0">DUTA INISIATIF INDONESIA #4</text>
  <rect x="14" y="24.500" width="30" height="1.300" fill="#d8dca0" opacity=".5"/>
  <path d="M40 86c2-10 10-16 20-18 8 6 22 6 30 0 10 2 16 8 18 18z" fill="#55584a" filter="url(#b1)"/>
  <ellipse cx="66" cy="44" rx="23" ry="30" fill="#3e3b2c" filter="url(#b1)"/>
  <path d="M42 40c-4-24 6-40 24-40 18 0 28 14 24 38-2-10-4-16-10-20-10 2-20 2-30 0-4 4-6 12-8 22z" fill="#15150f" filter="url(#b1)"/>
  <ellipse cx="66" cy="56" rx="7" ry="2" fill="#d8d8d0" filter="url(#b1)"/>
 </svg>
 </div>
<div class="a" style="left:1312px;top:454px;width:25.500px;height:25.500px;border-radius:50%;background:#2a7de1"></div>
<div class="a" style="left:1318.200px;top:465.200px;width:3.200px;height:3.200px;border-radius:50%;background:#fff;box-shadow:5px 0 0 #fff,10px 0 0 #fff"></div>
<div class="t" style="left:1216.50px;top:539.18px;font-size:13.7px;letter-spacing:0.246px;color:#fff;font-weight:bold;text-shadow:0 0 3px rgba(0,0,0,.6)">Fatah Martado</div>


<!-- ===== MEET: bottom controls ===== -->
<!-- bottom bar left -->
<div class="t" style="left:24.00px;top:623.60px;font-size:14.8px;letter-spacing:-0.633px;color:#fff;font-weight:bold">21.12</div>
<div class="a" style="left:70px;top:623px;width:1px;height:16px;background:#dadce0"></div>
<div class="t" style="left:83.70px;top:622.89px;font-size:15.6px;letter-spacing:0.466px;color:#fff;font-weight:bold">nhp-vazk-fgs</div>
<!-- centre controls -->
<div class="cb" style="left:473px"></div>
<svg style="left:482.500px;top:620.500px" width="21" height="21" viewBox="0 0 24 24"><path fill="#fff" d="M12 14c1.660 0 2.990-1.340 2.990-3L15 5c0-1.660-1.340-3-3-3S9 3.340 9 5v6c0 1.660 1.340 3 3 3zm5.300-3c0 3-2.540 5.100-5.300 5.100S6.700 14 6.700 11H5c0 3.410 2.720 6.230 6 6.720V21h2v-3.280c3.280-.48 6-3.300 6-6.720h-1.700z"/></svg>
<div class="cb" style="left:525px"></div>
<svg style="left:533.500px;top:619.500px" width="23" height="23" viewBox="0 0 24 24"><path fill="#fff" d="M15 8v8H5V8h10m1-2H4c-.55 0-1 .45-1 1v10c0 .55.45 1 1 1h12c.55 0 1-.45 1-1v-3.500l4 4v-11l-4 4V7c0-.55-.45-1-1-1z"/></svg>
<div class="cb" style="left:577px"></div>
<svg style="left:584.500px;top:618.500px" width="25" height="25" viewBox="0 0 24 24"><path fill="#fff" d="M19 4H5c-1.110 0-2 .9-2 2v12c0 1.100.89 2 2 2h14c1.100 0 2-.9 2-2V6c0-1.100-.9-2-2-2zm0 14H5V6h14v12zM7 15h3c.55 0 1-.45 1-1v-1H9.500v.5h-2v-3h2v.5H11v-1c0-.55-.45-1-1-1H7c-.55 0-1 .45-1 1v4c0 .55.45 1 1 1zm7 0h3c.55 0 1-.45 1-1v-1h-1.500v.5h-2v-3h2v.5H18v-1c0-.55-.45-1-1-1h-3c-.55 0-1 .45-1 1v4c0 .55.45 1 1 1z"/></svg>
<div class="cb" style="left:629px"></div>
<svg style="left:636.500px;top:618.500px" width="25" height="25" viewBox="0 0 24 24"><path fill="#fff" d="M11.990 2C6.470 2 2 6.480 2 12s4.470 10 9.990 10C17.520 22 22 17.520 22 12S17.520 2 11.990 2zM12 20c-4.420 0-8-3.580-8-8s3.580-8 8-8 8 3.580 8 8-3.580 8-8 8zm3.500-9c.83 0 1.500-.67 1.500-1.500S16.330 8 15.500 8 14 8.670 14 9.500s.67 1.500 1.500 1.500zm-7 0c.83 0 1.500-.67 1.500-1.500S9.330 8 8.500 8 7 8.670 7 9.500 7.670 11 8.500 11zm3.500 6.500c2.330 0 4.310-1.460 5.110-3.500H6.890c.8 2.040 2.780 3.500 5.110 3.500z"/></svg>
<div class="cb" style="left:681px"></div>
<svg style="left:688.500px;top:618.500px" width="25" height="25" viewBox="0 0 24 24"><path fill="#fff" d="M21 3H3c-1.110 0-2 .89-2 2v14c0 1.110.89 2 2 2h18c1.110 0 2-.89 2-2V5c0-1.110-.89-2-2-2zm0 16.020H3V4.980h18v14.040zM10 12H8l4-4 4 4h-2v4h-4v-4z"/></svg>
<div class="cb" style="left:733.500px"></div>
<svg style="left:741.500px;top:619px" width="23" height="23" viewBox="0 0 24 24"><path fill="none" stroke="#fff" stroke-width="1.700" stroke-linejoin="round" d="M13 23c-3.260 0-5.900-1.800-7.100-4.820l-2.900-7.200c-.3-.8.500-1.500 1.300-1.200.7.200 1.200.7 1.500 1.300L7.250 15H8V4.250a1.100 1.100 0 0 1 2.300 0V12h1.200V2.250a1.100 1.100 0 0 1 2.300 0V12h1.200V3.750a1.100 1.100 0 0 1 2.300 0V12h1.200V6.750a1.100 1.100 0 0 1 2.300 0V15.500c0 4.200-3.400 7.500-7.800 7.500z"/></svg>
<div class="cb" style="left:785px"></div>
<div class="a" style="left:803px;top:622.500px;width:4px;height:4px;border-radius:50%;background:#fff;box-shadow:0 6.500px 0 #fff,0 13px 0 #fff"></div>
<div class="a" style="left:837px;top:611px;width:56px;height:40px;border-radius:20px;background:#ea4335"></div>
<svg style="left:853.500px;top:619.500px" width="23" height="23" viewBox="0 0 24 24"><path fill="#fff" d="M12 9c-1.600 0-3.150.25-4.600.72v3.100c0 .39-.23.74-.56.900-.98.49-1.870 1.120-2.660 1.850-.18.18-.43.28-.7.280-.28 0-.53-.11-.71-.29L.29 13.080c-.18-.17-.29-.42-.29-.7 0-.28.110-.53.290-.71C3.340 8.780 7.460 7 12 7s8.660 1.780 11.710 4.670c.18.18.29.43.29.71 0 .28-.11.530-.29.710l-2.480 2.480c-.18.18-.43.290-.71.290-.27 0-.52-.11-.7-.28-.79-.74-1.690-1.360-2.670-1.850-.33-.16-.56-.5-.56-.9v-3.100C15.150 9.250 13.600 9 12 9z"/></svg>
<!-- right controls -->
<svg style="left:1173.200px;top:618.500px" width="25" height="25" viewBox="0 0 24 24"><path fill="#fff" d="M11 7h2v2h-2zm0 4h2v6h-2zm1-9C6.480 2 2 6.480 2 12s4.480 10 10 10 10-4.480 10-10S17.520 2 12 2zm0 18c-4.410 0-8-3.590-8-8s3.590-8 8-8 8 3.590 8 8-3.590 8-8 8z"/></svg>
<svg style="left:1221.500px;top:618.500px" width="25" height="25" viewBox="0 0 24 24"><path fill="#fff" d="M9 13.750c-2.340 0-7 1.170-7 3.500V19h14v-1.750c0-2.330-4.660-3.500-7-3.500zM4.340 17c.84-.58 2.870-1.250 4.660-1.250s3.820.67 4.660 1.250H4.340zM9 12c1.930 0 3.500-1.570 3.500-3.500S10.930 5 9 5 5.500 6.570 5.500 8.500 7.070 12 9 12zm0-5c.83 0 1.500.67 1.500 1.500S9.830 10 9 10s-1.500-.67-1.500-1.500S8.170 7 9 7zm7.040 6.810c1.160.84 1.960 1.960 1.960 3.440V19h4v-1.750c0-2.020-3.500-3.170-5.960-3.440zM15 12c1.930 0 3.500-1.570 3.500-3.500S16.930 5 15 5c-.54 0-1.040.13-1.500.35.630.89 1 1.980 1 3.150s-.37 2.260-1 3.150c.46.22.96.35 1.500.35z"/></svg>
<div class="a" style="left:1235.500px;top:599.500px;width:27px;height:18.500px;border-radius:9.500px;background:#5f6368"></div>
<div class="t" style="left:1242.50px;top:603.28px;font-size:11.0px;letter-spacing:0.750px;color:#fff;font-weight:bold">33</div>
<svg style="left:1269.500px;top:619px" width="25" height="25" viewBox="0 0 24 24"><path fill="#fff" d="M4 4h16v12H5.170L4 17.170V4m0-2c-1.100 0-1.990.9-1.990 2L2 22l4-4h14c1.100 0 2-.9 2-2V4c0-1.100-.9-2-2-2H4zm2 10h8v2H6v-2zm0-3h12v2H6V9zm0-3h12v2H6V6z"/></svg>
<div class="a" style="left:1287px;top:613px;width:8px;height:8px;border-radius:50%;background:#8ab4f8"></div>
<svg style="left:1318px;top:618px" width="25" height="25" viewBox="0 0 24 24"><path fill="#fff" d="M12 2l-5.500 9h11L12 2zm0 3.840L13.930 9h-3.870L12 5.840zM17.500 13c-2.490 0-4.500 2.010-4.500 4.500s2.010 4.500 4.500 4.500 4.500-2.010 4.500-4.500-2.010-4.500-4.500-4.500zm0 7c-1.380 0-2.500-1.120-2.500-2.500s1.120-2.500 2.500-2.500 2.500 1.120 2.500 2.500-1.120 2.500-2.500 2.500zM3 21.500h8v-8H3v8zm2-6h4v4H5v-4z"/></svg>


<!-- ===== DOWNLOAD BAR ===== -->
<div class="a" style="left:0;top:671px;width:1366px;height:57px;background:#fff"></div>
<!-- download shelf -->
<div class="a" style="left:20px;top:693.500px;width:16px;height:13.500px;background:#fff;border:1px solid #9aa7b8"></div>
<div class="a" style="left:22px;top:695.500px;width:12px;height:9.500px;background:linear-gradient(#8fc1e6 0,#cfe6f2 45%,#5f9a76 55%,#2f6f5a 100%)"></div>
<div class="t" style="left:49.00px;top:694.14px;font-size:12.8px;letter-spacing:0.001px;color:#3a3a46">191e8280-b2b0-4a....jpg</div>
<svg style="left:207.500px;top:697px" width="11" height="7" viewBox="0 0 11 7"><path d="M1 6l4.500-4.500L10 6" stroke="#333" stroke-width="1.700" fill="none"/></svg>
<div class="a" style="left:236px;top:678px;width:1px;height:44px;background:#c6c6c6"></div>
<div class="a" style="left:1203.500px;top:683.500px;width:126.500px;height:31.500px;border:1px solid #dadce0;border-radius:4px;background:#fff"></div>
<div class="t" style="left:1219.00px;top:692.90px;font-size:12.3px;letter-spacing:-0.121px;color:#3568c9">Tampilkan semua</div>
<svg style="left:1342.500px;top:693.500px" width="11" height="11" viewBox="0 0 11 11"><path d="M1 1l9 9M10 1l-9 9" stroke="#222" stroke-width="1.600" fill="none"/></svg>


<!-- ===== TASKBAR ===== -->
<div class="a" style="left:0;top:728px;width:1366px;height:40px;background:linear-gradient(#4a5462 0,#1a212d 1px,#0d121c 3px,#090d15 100%)"></div>
<!-- start orb -->
<div class="a" style="left:8px;top:729px;width:38px;height:38px;border-radius:50%;background:radial-gradient(circle at 50% 30%,#9fd0f2 0,#3f8fd0 38%,#1b4f8a 65%,#0c2a52 100%);box-shadow:0 0 0 1px rgba(180,210,240,.5),0 0 4px rgba(90,150,220,.6)"></div>
<svg style="left:15.500px;top:737px" width="23" height="22" viewBox="0 0 23 22"><path d="M1.500 4.500c3-1.800 6-1.800 9-.3L9 10.700c-3-1.500-6-1.500-9 .3z" fill="#f0582a"/><path d="M12 4.800c3 1.500 6 1.500 9-.3l-1.500 6.500c-3 1.800-6 1.800-9 .3z" fill="#8cc63f"/><path d="M-.3 12.500c3-1.800 6-1.800 9-.3l-1.500 6.500c-3-1.500-6-1.500-9 .3z" fill="#2ea3e6"/><path d="M10.200 12.800c3 1.500 6 1.500 9-.3l-1.500 6.500c-3 1.800-6 1.800-9 .3z" fill="#fbbc1a"/></svg>
<!-- explorer -->
<svg style="left:73px;top:734px" width="33" height="30" viewBox="0 0 33 30"><path d="M1 6a2 2 0 0 1 2-2h8l3 3h16a2 2 0 0 1 2 2v17a2 2 0 0 1-2 2H3a2 2 0 0 1-2-2z" fill="#f2d98a" stroke="#c9a84e" stroke-width="1"/><path d="M1 11h31v15a2 2 0 0 1-2 2H3a2 2 0 0 1-2-2z" fill="#f7e6a8"/><rect x="4" y="2" width="4" height="3" fill="#3faa3f"/><rect x="12" y="4" width="4" height="3" fill="#d94a3a"/><rect x="20" y="6" width="4" height="3" fill="#3f8ad9"/><path d="M6 17h21v12h-5v-7H11v7H6z" fill="#8fc7ea" stroke="#5a9ac8" stroke-width="1"/><path d="M8 19h17v2H8z" fill="#d9eefa"/></svg>
<!-- chrome -->
<svg style="left:135px;top:732px" width="32" height="32" viewBox="0 0 32 32"><circle cx="16" cy="16" r="16" fill="#fff"/><path d="M16 16L2.100 8A16 16 0 0 1 29.900 8z" fill="#ea4335"/><path d="M16 16L29.900 8A16 16 0 0 1 16 32z" fill="#fbbc04"/><path d="M16 16L16 32A16 16 0 0 1 2.100 8z" fill="#34a853"/><circle cx="16" cy="16" r="7.500" fill="#fff"/><circle cx="16" cy="16" r="6" fill="#4285f4"/></svg>
<!-- edge -->
<svg style="left:197px;top:732px" width="32" height="32" viewBox="0 0 32 32"><defs><linearGradient id="eg1" x1="0" y1="0" x2="1" y2="1"><stop offset="0" stop-color="#35c1f1"/><stop offset="1" stop-color="#0f6fc0"/></linearGradient><linearGradient id="eg2" x1="0" y1="0" x2="1" y2="0"><stop offset="0" stop-color="#1b9de2"/><stop offset="1" stop-color="#5fd35a"/></linearGradient></defs><circle cx="16" cy="16" r="16" fill="url(#eg1)"/><path d="M1 12C3 4 9 0 16 0c9 0 16 6 16 14 0 5-4 8-8 8-4 0-6-2-6-3 1-1 2-2 2-4 0-3-3-6-7-6-5 0-9 3-12 3z" fill="url(#eg2)"/><path d="M12 13c-3 2-4 6-2 10 2 4 6 7 12 7-8 2-16-2-18-10 0-4 3-7 8-7z" fill="#0c59a4"/><path d="M14 19c0-3 2-5 5-5 0 2-1 4-1 5 1 2 3 3 6 3-4 2-10 1-10-3z" fill="#0a2540"/></svg>
<!-- excel -->
<svg style="left:259px;top:731px" width="31" height="31" viewBox="0 0 31 31"><path d="M1.500 3.500c7-2.500 15-3 24-2.500v22c-8 0-16 1.500-24 4.500z" fill="#eef6ea" stroke="#3a8f45" stroke-width="1.300"/><path d="M3 5.500c6-2 12-2.600 18-2.600v8c-6 0-12 .6-18 2.600z" fill="#cfe8c8"/><path d="M5.500 6.500l11 15M16.500 6l-11 16" stroke="#1f7a35" stroke-width="3.800"/><path d="M13.500 17.500l16.500-3-2 13.500-17 2z" fill="#fff" stroke="#a6cfa6" stroke-width=".8"/><path d="M15 20.500l13-2.300M14.500 23.300l13-2.300M14 26l13-2.300" stroke="#6ab56a" stroke-width="1.100"/></svg>
<!-- word (running) -->
<div class="a" style="left:308px;top:729px;width:58px;height:38px;border-radius:3px;border:1px solid #6a7078;background:linear-gradient(135deg,#5a5f66 0,#3a3e45 45%,#1c1f25 55%,#23262c 100%)"></div>
<svg style="left:321px;top:731px" width="31" height="31" viewBox="0 0 31 31"><path d="M1.500 3.500c7-2.500 15-3 24-2.500v22c-8 0-16 1.500-24 4.500z" fill="#f1f5fb" stroke="#2a5fb4" stroke-width="1.300"/><path d="M3 5.500c6-2 12-2.600 18-2.600v8c-6 0-12 .6-18 2.600z" fill="#d4e2f6"/><path d="M4 6.500l3.500 13.500 3.500-11 3.500 11 3.800-14.500" stroke="#1b4ea6" stroke-width="3.600" fill="none" stroke-linejoin="miter"/><path d="M13.500 17.500l16.500-3-2 13.500-17 2z" fill="#fff" stroke="#a9bfe0" stroke-width=".8"/><path d="M15 20.500l13-2.300M14.500 23.300l13-2.300M14 26l13-2.300" stroke="#7aa0d8" stroke-width="1.100"/></svg>
<!-- chrome (active) -->
<div class="a" style="left:370px;top:729px;width:58.500px;height:38px;border-radius:3px;border:1px solid #d8d8d8;background:linear-gradient(135deg,#b9b9b9 0,#a4a4a4 45%,#7c7c7c 55%,#8e8e8e 100%)"></div>
<svg style="left:383px;top:732px" width="32" height="32" viewBox="0 0 32 32"><circle cx="16" cy="16" r="16" fill="#fff"/><path d="M16 16L2.100 8A16 16 0 0 1 29.900 8z" fill="#ea4335"/><path d="M16 16L29.900 8A16 16 0 0 1 16 32z" fill="#fbbc04"/><path d="M16 16L16 32A16 16 0 0 1 2.100 8z" fill="#34a853"/><circle cx="16" cy="16" r="7.500" fill="#fff"/><circle cx="16" cy="16" r="6" fill="#4285f4"/></svg>
<div class="a" style="left:398.500px;top:748px;width:16px;height:16px;border-radius:50%;background:#4a28ae"></div>
<div class="t" style="left:404.00px;top:751.88px;font-size:8.5px;color:#fff">F</div>
<!-- tray -->
<div class="t" style="left:1126.50px;top:740.34px;font-size:10.5px;letter-spacing:-0.300px;color:#e8e8e8">IN</div>
<svg style="left:1156px;top:747px" width="8" height="4" viewBox="0 0 8 4"><path d="M4 0l4 4H0z" fill="#e8e8e8"/></svg>
<svg style="left:1176.500px;top:742px" width="16" height="15" viewBox="0 0 16 15"><path d="M1 0v14" stroke="#e8e8e8" stroke-width="1.200"/><path d="M2 1c3-1 5 1 8 0s3 0 3 0v6c-2 1-4 0-6 0S4 8 2 8z" fill="#f2f2f2"/><circle cx="10.500" cy="10.500" r="4.300" fill="#d9281e" stroke="#f4b0aa" stroke-width=".6"/><path d="M8.700 8.700l3.600 3.600M12.300 8.700l-3.600 3.600" stroke="#fff" stroke-width="1.300"/></svg>
<svg style="left:1201px;top:741.500px" width="13" height="15" viewBox="0 0 13 15"><rect x=".6" y="2.600" width="8" height="11" rx="1" fill="none" stroke="#e8e8e8" stroke-width="1.200"/><rect x="2.200" y="7" width="4.800" height="5" fill="#e8e8e8"/><path d="M8 1v3M11 1v3M6.800 4h5.400v3l-1.700 2v3" stroke="#f2f2f2" stroke-width="1.300" fill="none"/><rect x="7" y="4" width="5" height="3.500" fill="#f2f2f2"/></svg>
<svg style="left:1224.500px;top:743.500px" width="15" height="11" viewBox="0 0 15 11"><path d="M.8 10.300v-1M3.800 10.300v-2.800M6.800 10.300v-4.800M9.800 10.300v-7M12.800 10.300v-10" stroke="#f0f0f0" stroke-width="2"/></svg>
<svg style="left:1248.500px;top:742px" width="14" height="14" viewBox="0 0 14 14"><path d="M0 4.500h3L7 .8v12.400L3 9.500H0z" fill="#f0f0f0"/><path d="M8.800 4.500c1 1.500 1 3.500 0 5M10.800 2.500c2 2.800 2 6.200 0 9" stroke="#e0e0e0" stroke-width="1.100" fill="none"/></svg>
<div class="t" style="left:1298.00px;top:735.06px;font-size:12.0px;letter-spacing:-0.833px;color:#f2f2f2">21:12</div>
<div class="t" style="left:1282.00px;top:751.76px;font-size:12.0px;letter-spacing:-0.262px;color:#f2f2f2">29/07/2023</div>
<div class="a" style="left:1352px;top:729px;width:14px;height:39px;border:1px solid #59626e;border-right:none;background:linear-gradient(135deg,#3c4048 0,#1a1d23 55%,#0c0f15 100%)"></div>


</div>
</body>
</html>
